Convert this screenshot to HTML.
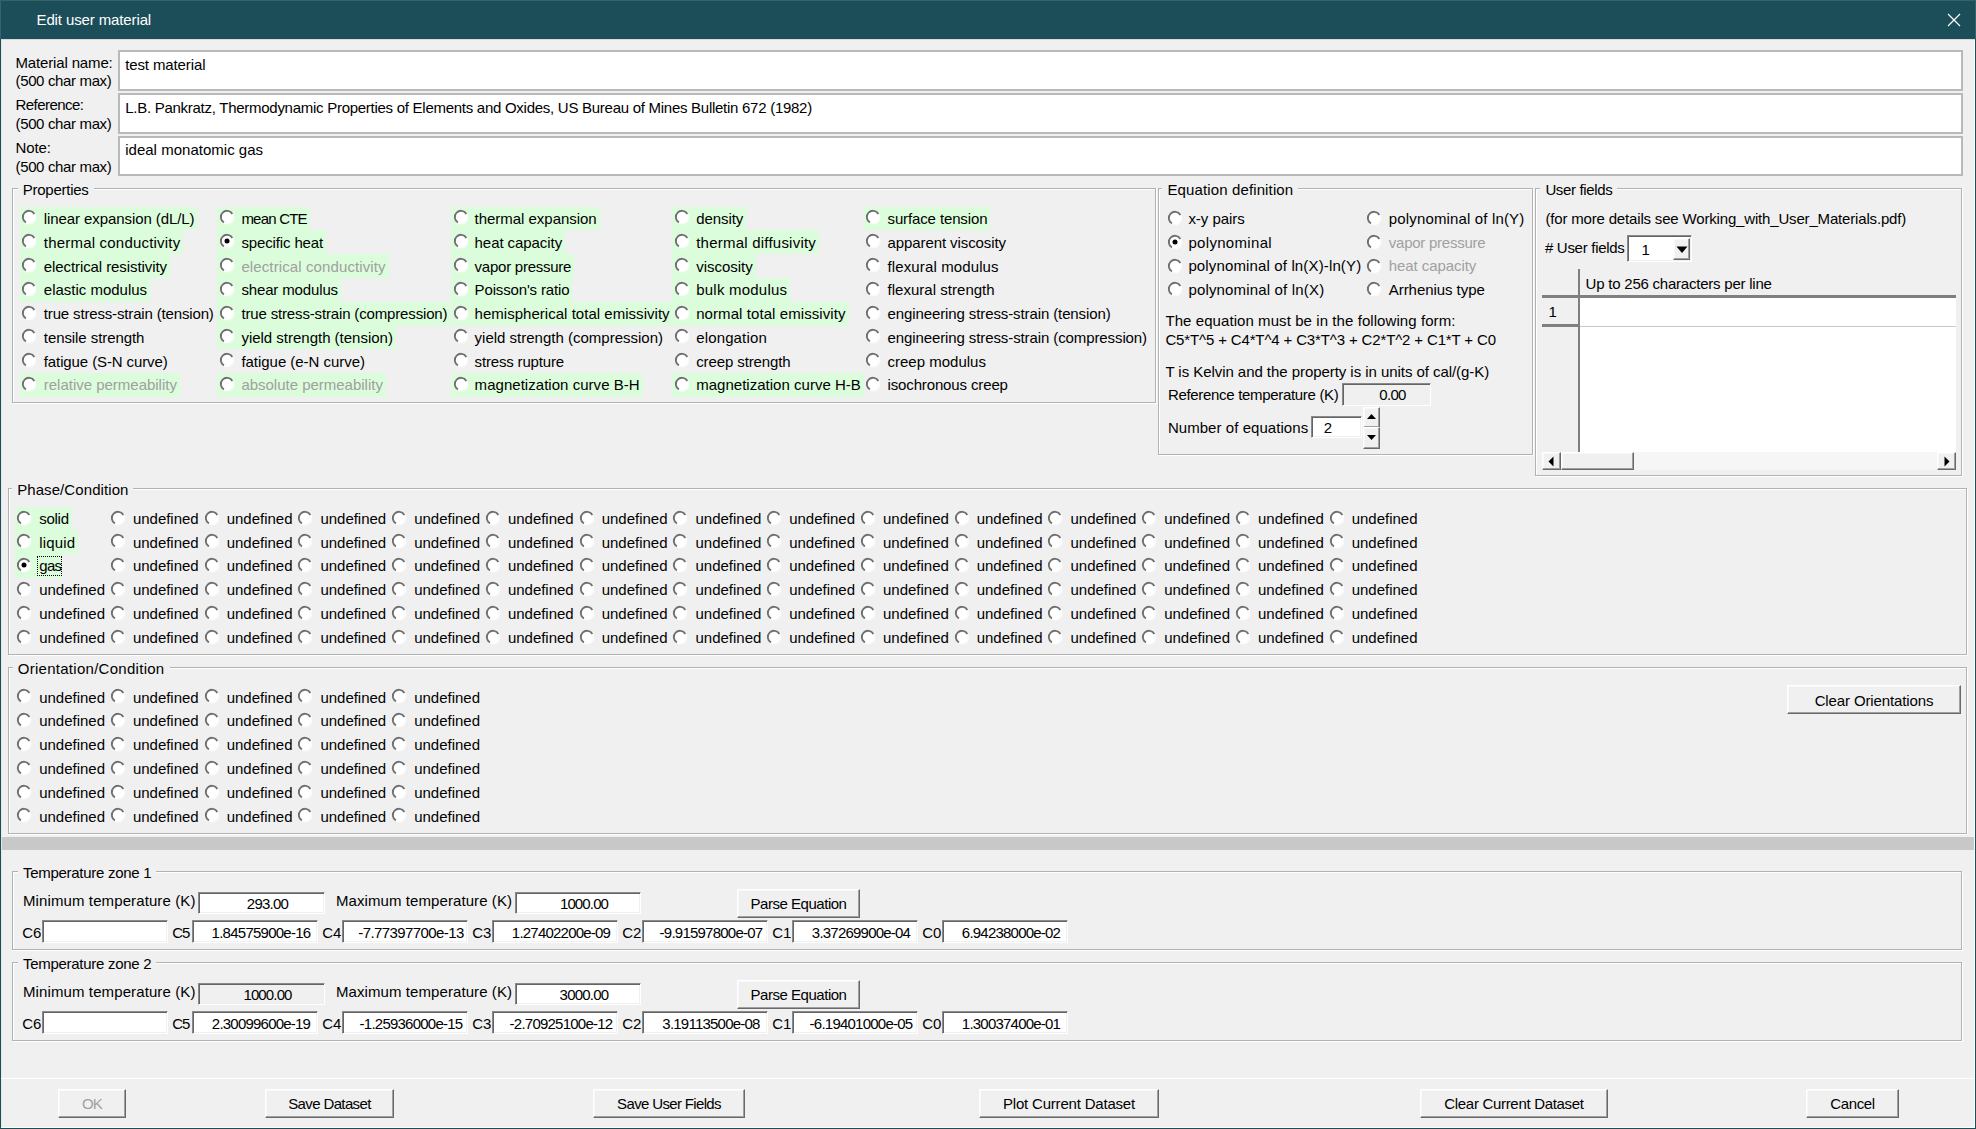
<!DOCTYPE html>
<html><head><meta charset="utf-8"><title>Edit user material</title>
<style>
html,body{margin:0;padding:0}
body{width:1976px;height:1129px;overflow:hidden;background:#f0f0f0;position:relative;font-family:"Liberation Sans",sans-serif;font-size:15px;color:#000}
.a{position:absolute}
.t{position:absolute;white-space:pre;line-height:20px;letter-spacing:-0.15px}
</style></head><body>

<div class="a" style="left:0px;top:0px;width:1976px;height:39px;background:#1c4e59"></div>
<div class="a" style="left:0px;top:0px;width:1976px;height:1px;background:#35636c"></div>
<div class="a" style="left:0px;top:0px;width:1px;height:39px;background:#35636c"></div>
<div class="a" style="left:1975px;top:0px;width:1px;height:39px;background:#35636c"></div>
<div class="t" style="left:36.5px;top:9.8px;color:#fff;letter-spacing:-0.118px">Edit user material</div>
<svg class="a" style="left:1947px;top:13px" width="14" height="14"><path d="M1 1L13 13M13 1L1 13" stroke="#fff" stroke-width="1.2"/></svg>
<div class="a" style="left:0px;top:39px;width:1px;height:1090px;background:#1c4e59"></div>
<div class="a" style="left:1975px;top:39px;width:1px;height:1090px;background:#1c4e59"></div>
<div class="a" style="left:0px;top:1128px;width:1976px;height:1px;background:#1c4e59"></div>
<div class="a" style="left:1px;top:39px;width:1974px;height:1px;background:#d9d9d9"></div>
<div class="a" style="left:1px;top:40px;width:1px;height:1087px;background:#e6e6e6"></div>
<div class="a" style="left:1px;top:1127px;width:1974px;height:1px;background:#fff"></div>
<div class="a" style="left:1974px;top:40px;width:1px;height:1088px;background:#fff"></div>
<div class="t" style="left:15.5px;top:52.7px;letter-spacing:-0.151px">Material name:</div>
<div class="t" style="left:15.5px;top:71.4px;letter-spacing:-0.355px">(500 char max)</div>
<div class="a" style="left:118px;top:50px;width:1845px;height:41px;background:#fff;box-sizing:border-box;border:2px solid #b9b9b9"></div>
<div class="t" style="left:125.2px;top:54.6px;letter-spacing:-0.116px">test material</div>
<div class="t" style="left:15.5px;top:95.1px;letter-spacing:-0.558px">Reference:</div>
<div class="t" style="left:15.5px;top:114.0px;letter-spacing:-0.355px">(500 char max)</div>
<div class="a" style="left:118px;top:93px;width:1845px;height:41px;background:#fff;box-sizing:border-box;border:2px solid #b9b9b9"></div>
<div class="t" style="left:125.2px;top:97.8px;letter-spacing:-0.27px">L.B. Pankratz, Thermodynamic Properties of Elements and Oxides, US Bureau of Mines Bulletin 672 (1982)</div>
<div class="t" style="left:15.5px;top:138.1px;letter-spacing:-0.092px">Note:</div>
<div class="t" style="left:15.5px;top:157.0px;letter-spacing:-0.355px">(500 char max)</div>
<div class="a" style="left:118px;top:136px;width:1845px;height:40px;background:#fff;box-sizing:border-box;border:2px solid #b9b9b9"></div>
<div class="t" style="left:125.2px;top:139.9px;letter-spacing:0.017px">ideal monatomic gas</div>
<div class="a" style="left:13px;top:189px;width:1144px;height:215px;border:1px solid #fff;box-sizing:border-box"></div>
<div class="a" style="left:12px;top:188px;width:1144px;height:215px;border:1px solid #b2b2b2;box-sizing:border-box"></div>
<div class="a" style="left:18px;top:186px;width:76px;height:5px;background:#f0f0f0"></div>
<div class="t" style="left:22.8px;top:180.0px;letter-spacing:-0.258px">Properties</div>
<div class="a" style="left:20px;top:207px;width:177px;height:23px;background:#dcfddc"></div>
<div class="a" style="left:20px;top:230px;width:163px;height:24px;background:#dcfddc"></div>
<div class="a" style="left:20px;top:254px;width:150px;height:24px;background:#dcfddc"></div>
<div class="a" style="left:20px;top:278px;width:130px;height:24px;background:#dcfddc"></div>
<div class="a" style="left:20px;top:373px;width:160px;height:24px;background:#dcfddc"></div>
<div class="a" style="left:217px;top:207px;width:93px;height:23px;background:#dcfddc"></div>
<div class="a" style="left:217px;top:230px;width:109px;height:24px;background:#dcfddc"></div>
<div class="a" style="left:217px;top:254px;width:172px;height:24px;background:#dcfddc"></div>
<div class="a" style="left:217px;top:278px;width:124px;height:24px;background:#dcfddc"></div>
<div class="a" style="left:217px;top:302px;width:233px;height:24px;background:#dcfddc"></div>
<div class="a" style="left:217px;top:325px;width:179px;height:24px;background:#dcfddc"></div>
<div class="a" style="left:217px;top:373px;width:169px;height:24px;background:#dcfddc"></div>
<div class="a" style="left:451px;top:207px;width:149px;height:23px;background:#dcfddc"></div>
<div class="a" style="left:451px;top:230px;width:114px;height:24px;background:#dcfddc"></div>
<div class="a" style="left:451px;top:254px;width:123px;height:24px;background:#dcfddc"></div>
<div class="a" style="left:451px;top:278px;width:121px;height:24px;background:#dcfddc"></div>
<div class="a" style="left:451px;top:302px;width:222px;height:24px;background:#dcfddc"></div>
<div class="a" style="left:451px;top:373px;width:192px;height:24px;background:#dcfddc"></div>
<div class="a" style="left:672px;top:207px;width:74px;height:23px;background:#dcfddc"></div>
<div class="a" style="left:672px;top:230px;width:147px;height:24px;background:#dcfddc"></div>
<div class="a" style="left:672px;top:254px;width:84px;height:24px;background:#dcfddc"></div>
<div class="a" style="left:672px;top:278px;width:118px;height:24px;background:#dcfddc"></div>
<div class="a" style="left:672px;top:302px;width:177px;height:24px;background:#dcfddc"></div>
<div class="a" style="left:672px;top:373px;width:192px;height:24px;background:#dcfddc"></div>
<div class="a" style="left:864px;top:207px;width:126px;height:23px;background:#dcfddc"></div>
<svg class="a" style="left:21.40px;top:209.45px" width="16" height="16"><circle cx="8" cy="8" r="6.8" fill="none" stroke="#fbfbfb" stroke-width="1.2"/><circle cx="8" cy="8" r="6.2" fill="#fff"/><path d="M4.9 13.37A6.2 6.2 0 1 1 13.37 4.9" stroke="#707070" stroke-width="1.9" fill="none"/></svg>
<div class="t" style="left:43.8px;top:209.0px;letter-spacing:-0.087px">linear expansion (dL/L)</div>
<svg class="a" style="left:21.40px;top:233.22px" width="16" height="16"><circle cx="8" cy="8" r="6.8" fill="none" stroke="#fbfbfb" stroke-width="1.2"/><circle cx="8" cy="8" r="6.2" fill="#fff"/><path d="M4.9 13.37A6.2 6.2 0 1 1 13.37 4.9" stroke="#707070" stroke-width="1.9" fill="none"/></svg>
<div class="t" style="left:43.8px;top:232.8px;letter-spacing:0.202px">thermal conductivity</div>
<svg class="a" style="left:21.40px;top:256.99px" width="16" height="16"><circle cx="8" cy="8" r="6.8" fill="none" stroke="#fbfbfb" stroke-width="1.2"/><circle cx="8" cy="8" r="6.2" fill="#fff"/><path d="M4.9 13.37A6.2 6.2 0 1 1 13.37 4.9" stroke="#707070" stroke-width="1.9" fill="none"/></svg>
<div class="t" style="left:43.8px;top:256.6px;letter-spacing:-0.088px">electrical resistivity</div>
<svg class="a" style="left:21.40px;top:280.76px" width="16" height="16"><circle cx="8" cy="8" r="6.8" fill="none" stroke="#fbfbfb" stroke-width="1.2"/><circle cx="8" cy="8" r="6.2" fill="#fff"/><path d="M4.9 13.37A6.2 6.2 0 1 1 13.37 4.9" stroke="#707070" stroke-width="1.9" fill="none"/></svg>
<div class="t" style="left:43.8px;top:280.4px;letter-spacing:-0.006px">elastic modulus</div>
<svg class="a" style="left:21.40px;top:304.53px" width="16" height="16"><circle cx="8" cy="8" r="6.8" fill="none" stroke="#fbfbfb" stroke-width="1.2"/><circle cx="8" cy="8" r="6.2" fill="#fff"/><path d="M4.9 13.37A6.2 6.2 0 1 1 13.37 4.9" stroke="#707070" stroke-width="1.9" fill="none"/></svg>
<div class="t" style="left:43.8px;top:304.1px;letter-spacing:-0.155px">true stress-strain (tension)</div>
<svg class="a" style="left:21.40px;top:328.30px" width="16" height="16"><circle cx="8" cy="8" r="6.8" fill="none" stroke="#fbfbfb" stroke-width="1.2"/><circle cx="8" cy="8" r="6.2" fill="#fff"/><path d="M4.9 13.37A6.2 6.2 0 1 1 13.37 4.9" stroke="#707070" stroke-width="1.9" fill="none"/></svg>
<div class="t" style="left:43.8px;top:327.9px;letter-spacing:-0.077px">tensile strength</div>
<svg class="a" style="left:21.40px;top:352.07px" width="16" height="16"><circle cx="8" cy="8" r="6.8" fill="none" stroke="#fbfbfb" stroke-width="1.2"/><circle cx="8" cy="8" r="6.2" fill="#fff"/><path d="M4.9 13.37A6.2 6.2 0 1 1 13.37 4.9" stroke="#707070" stroke-width="1.9" fill="none"/></svg>
<div class="t" style="left:43.8px;top:351.7px;letter-spacing:-0.109px">fatigue (S-N curve)</div>
<svg class="a" style="left:21.40px;top:375.84px" width="16" height="16"><circle cx="8" cy="8" r="6.8" fill="none" stroke="#fbfbfb" stroke-width="1.2"/><circle cx="8" cy="8" r="6.2" fill="#fff"/><path d="M4.9 13.37A6.2 6.2 0 1 1 13.37 4.9" stroke="#707070" stroke-width="1.9" fill="none"/></svg>
<div class="t" style="left:43.8px;top:375.4px;color:#a0a0a0;letter-spacing:-0.014px">relative permeability</div>
<svg class="a" style="left:219.40px;top:209.45px" width="16" height="16"><circle cx="8" cy="8" r="6.8" fill="none" stroke="#fbfbfb" stroke-width="1.2"/><circle cx="8" cy="8" r="6.2" fill="#fff"/><path d="M4.9 13.37A6.2 6.2 0 1 1 13.37 4.9" stroke="#707070" stroke-width="1.9" fill="none"/></svg>
<div class="t" style="left:241.4px;top:209.0px;letter-spacing:-0.788px">mean CTE</div>
<svg class="a" style="left:219.40px;top:233.22px" width="16" height="16"><circle cx="8" cy="8" r="6.8" fill="none" stroke="#fbfbfb" stroke-width="1.2"/><circle cx="8" cy="8" r="6.2" fill="#fff"/><path d="M4.9 13.37A6.2 6.2 0 1 1 13.37 4.9" stroke="#707070" stroke-width="1.9" fill="none"/><circle cx="8" cy="8" r="2.5" fill="#000"/></svg>
<div class="t" style="left:241.4px;top:232.8px;letter-spacing:-0.13px">specific heat</div>
<svg class="a" style="left:219.40px;top:256.99px" width="16" height="16"><circle cx="8" cy="8" r="6.8" fill="none" stroke="#fbfbfb" stroke-width="1.2"/><circle cx="8" cy="8" r="6.2" fill="#fff"/><path d="M4.9 13.37A6.2 6.2 0 1 1 13.37 4.9" stroke="#707070" stroke-width="1.9" fill="none"/></svg>
<div class="t" style="left:241.4px;top:256.6px;color:#a0a0a0;letter-spacing:0.112px">electrical conductivity</div>
<svg class="a" style="left:219.40px;top:280.76px" width="16" height="16"><circle cx="8" cy="8" r="6.8" fill="none" stroke="#fbfbfb" stroke-width="1.2"/><circle cx="8" cy="8" r="6.2" fill="#fff"/><path d="M4.9 13.37A6.2 6.2 0 1 1 13.37 4.9" stroke="#707070" stroke-width="1.9" fill="none"/></svg>
<div class="t" style="left:241.4px;top:280.4px;letter-spacing:-0.138px">shear modulus</div>
<svg class="a" style="left:219.40px;top:304.53px" width="16" height="16"><circle cx="8" cy="8" r="6.8" fill="none" stroke="#fbfbfb" stroke-width="1.2"/><circle cx="8" cy="8" r="6.2" fill="#fff"/><path d="M4.9 13.37A6.2 6.2 0 1 1 13.37 4.9" stroke="#707070" stroke-width="1.9" fill="none"/></svg>
<div class="t" style="left:241.4px;top:304.1px;letter-spacing:-0.153px">true stress-strain (compression)</div>
<svg class="a" style="left:219.40px;top:328.30px" width="16" height="16"><circle cx="8" cy="8" r="6.8" fill="none" stroke="#fbfbfb" stroke-width="1.2"/><circle cx="8" cy="8" r="6.2" fill="#fff"/><path d="M4.9 13.37A6.2 6.2 0 1 1 13.37 4.9" stroke="#707070" stroke-width="1.9" fill="none"/></svg>
<div class="t" style="left:241.4px;top:327.9px;letter-spacing:-0.01px">yield strength (tension)</div>
<svg class="a" style="left:219.40px;top:352.07px" width="16" height="16"><circle cx="8" cy="8" r="6.8" fill="none" stroke="#fbfbfb" stroke-width="1.2"/><circle cx="8" cy="8" r="6.2" fill="#fff"/><path d="M4.9 13.37A6.2 6.2 0 1 1 13.37 4.9" stroke="#707070" stroke-width="1.9" fill="none"/></svg>
<div class="t" style="left:241.4px;top:351.7px;letter-spacing:-0.033px">fatigue (e-N curve)</div>
<svg class="a" style="left:219.40px;top:375.84px" width="16" height="16"><circle cx="8" cy="8" r="6.8" fill="none" stroke="#fbfbfb" stroke-width="1.2"/><circle cx="8" cy="8" r="6.2" fill="#fff"/><path d="M4.9 13.37A6.2 6.2 0 1 1 13.37 4.9" stroke="#707070" stroke-width="1.9" fill="none"/></svg>
<div class="t" style="left:241.4px;top:375.4px;color:#a0a0a0;letter-spacing:-0.012px">absolute permeability</div>
<svg class="a" style="left:452.80px;top:209.45px" width="16" height="16"><circle cx="8" cy="8" r="6.8" fill="none" stroke="#fbfbfb" stroke-width="1.2"/><circle cx="8" cy="8" r="6.2" fill="#fff"/><path d="M4.9 13.37A6.2 6.2 0 1 1 13.37 4.9" stroke="#707070" stroke-width="1.9" fill="none"/></svg>
<div class="t" style="left:474.6px;top:209.0px;letter-spacing:-0.028px">thermal expansion</div>
<svg class="a" style="left:452.80px;top:233.22px" width="16" height="16"><circle cx="8" cy="8" r="6.8" fill="none" stroke="#fbfbfb" stroke-width="1.2"/><circle cx="8" cy="8" r="6.2" fill="#fff"/><path d="M4.9 13.37A6.2 6.2 0 1 1 13.37 4.9" stroke="#707070" stroke-width="1.9" fill="none"/></svg>
<div class="t" style="left:474.6px;top:232.8px;letter-spacing:-0.069px">heat capacity</div>
<svg class="a" style="left:452.80px;top:256.99px" width="16" height="16"><circle cx="8" cy="8" r="6.8" fill="none" stroke="#fbfbfb" stroke-width="1.2"/><circle cx="8" cy="8" r="6.2" fill="#fff"/><path d="M4.9 13.37A6.2 6.2 0 1 1 13.37 4.9" stroke="#707070" stroke-width="1.9" fill="none"/></svg>
<div class="t" style="left:474.6px;top:256.6px;letter-spacing:-0.247px">vapor pressure</div>
<svg class="a" style="left:452.80px;top:280.76px" width="16" height="16"><circle cx="8" cy="8" r="6.8" fill="none" stroke="#fbfbfb" stroke-width="1.2"/><circle cx="8" cy="8" r="6.2" fill="#fff"/><path d="M4.9 13.37A6.2 6.2 0 1 1 13.37 4.9" stroke="#707070" stroke-width="1.9" fill="none"/></svg>
<div class="t" style="left:474.6px;top:280.4px;letter-spacing:-0.152px">Poisson's ratio</div>
<svg class="a" style="left:452.80px;top:304.53px" width="16" height="16"><circle cx="8" cy="8" r="6.8" fill="none" stroke="#fbfbfb" stroke-width="1.2"/><circle cx="8" cy="8" r="6.2" fill="#fff"/><path d="M4.9 13.37A6.2 6.2 0 1 1 13.37 4.9" stroke="#707070" stroke-width="1.9" fill="none"/></svg>
<div class="t" style="left:474.6px;top:304.1px;letter-spacing:0.026px">hemispherical total emissivity</div>
<svg class="a" style="left:452.80px;top:328.30px" width="16" height="16"><circle cx="8" cy="8" r="6.8" fill="none" stroke="#fbfbfb" stroke-width="1.2"/><circle cx="8" cy="8" r="6.2" fill="#fff"/><path d="M4.9 13.37A6.2 6.2 0 1 1 13.37 4.9" stroke="#707070" stroke-width="1.9" fill="none"/></svg>
<div class="t" style="left:474.6px;top:327.9px;letter-spacing:-0.001px">yield strength (compression)</div>
<svg class="a" style="left:452.80px;top:352.07px" width="16" height="16"><circle cx="8" cy="8" r="6.8" fill="none" stroke="#fbfbfb" stroke-width="1.2"/><circle cx="8" cy="8" r="6.2" fill="#fff"/><path d="M4.9 13.37A6.2 6.2 0 1 1 13.37 4.9" stroke="#707070" stroke-width="1.9" fill="none"/></svg>
<div class="t" style="left:474.6px;top:351.7px;letter-spacing:-0.172px">stress rupture</div>
<svg class="a" style="left:452.80px;top:375.84px" width="16" height="16"><circle cx="8" cy="8" r="6.8" fill="none" stroke="#fbfbfb" stroke-width="1.2"/><circle cx="8" cy="8" r="6.2" fill="#fff"/><path d="M4.9 13.37A6.2 6.2 0 1 1 13.37 4.9" stroke="#707070" stroke-width="1.9" fill="none"/></svg>
<div class="t" style="left:474.6px;top:375.4px;letter-spacing:0.037px">magnetization curve B-H</div>
<svg class="a" style="left:673.50px;top:209.45px" width="16" height="16"><circle cx="8" cy="8" r="6.8" fill="none" stroke="#fbfbfb" stroke-width="1.2"/><circle cx="8" cy="8" r="6.2" fill="#fff"/><path d="M4.9 13.37A6.2 6.2 0 1 1 13.37 4.9" stroke="#707070" stroke-width="1.9" fill="none"/></svg>
<div class="t" style="left:696.2px;top:209.0px;letter-spacing:-0.076px">density</div>
<svg class="a" style="left:673.50px;top:233.22px" width="16" height="16"><circle cx="8" cy="8" r="6.8" fill="none" stroke="#fbfbfb" stroke-width="1.2"/><circle cx="8" cy="8" r="6.2" fill="#fff"/><path d="M4.9 13.37A6.2 6.2 0 1 1 13.37 4.9" stroke="#707070" stroke-width="1.9" fill="none"/></svg>
<div class="t" style="left:696.2px;top:232.8px;letter-spacing:0.226px">thermal diffusivity</div>
<svg class="a" style="left:673.50px;top:256.99px" width="16" height="16"><circle cx="8" cy="8" r="6.8" fill="none" stroke="#fbfbfb" stroke-width="1.2"/><circle cx="8" cy="8" r="6.2" fill="#fff"/><path d="M4.9 13.37A6.2 6.2 0 1 1 13.37 4.9" stroke="#707070" stroke-width="1.9" fill="none"/></svg>
<div class="t" style="left:696.2px;top:256.6px;letter-spacing:-0.021px">viscosity</div>
<svg class="a" style="left:673.50px;top:280.76px" width="16" height="16"><circle cx="8" cy="8" r="6.8" fill="none" stroke="#fbfbfb" stroke-width="1.2"/><circle cx="8" cy="8" r="6.2" fill="#fff"/><path d="M4.9 13.37A6.2 6.2 0 1 1 13.37 4.9" stroke="#707070" stroke-width="1.9" fill="none"/></svg>
<div class="t" style="left:696.2px;top:280.4px;letter-spacing:0.226px">bulk modulus</div>
<svg class="a" style="left:673.50px;top:304.53px" width="16" height="16"><circle cx="8" cy="8" r="6.8" fill="none" stroke="#fbfbfb" stroke-width="1.2"/><circle cx="8" cy="8" r="6.2" fill="#fff"/><path d="M4.9 13.37A6.2 6.2 0 1 1 13.37 4.9" stroke="#707070" stroke-width="1.9" fill="none"/></svg>
<div class="t" style="left:696.2px;top:304.1px;letter-spacing:0.081px">normal total emissivity</div>
<svg class="a" style="left:673.50px;top:328.30px" width="16" height="16"><circle cx="8" cy="8" r="6.8" fill="none" stroke="#fbfbfb" stroke-width="1.2"/><circle cx="8" cy="8" r="6.2" fill="#fff"/><path d="M4.9 13.37A6.2 6.2 0 1 1 13.37 4.9" stroke="#707070" stroke-width="1.9" fill="none"/></svg>
<div class="t" style="left:696.2px;top:327.9px;letter-spacing:0.147px">elongation</div>
<svg class="a" style="left:673.50px;top:352.07px" width="16" height="16"><circle cx="8" cy="8" r="6.8" fill="none" stroke="#fbfbfb" stroke-width="1.2"/><circle cx="8" cy="8" r="6.2" fill="#fff"/><path d="M4.9 13.37A6.2 6.2 0 1 1 13.37 4.9" stroke="#707070" stroke-width="1.9" fill="none"/></svg>
<div class="t" style="left:696.2px;top:351.7px;letter-spacing:-0.106px">creep strength</div>
<svg class="a" style="left:673.50px;top:375.84px" width="16" height="16"><circle cx="8" cy="8" r="6.8" fill="none" stroke="#fbfbfb" stroke-width="1.2"/><circle cx="8" cy="8" r="6.2" fill="#fff"/><path d="M4.9 13.37A6.2 6.2 0 1 1 13.37 4.9" stroke="#707070" stroke-width="1.9" fill="none"/></svg>
<div class="t" style="left:696.2px;top:375.4px;letter-spacing:0.02px">magnetization curve H-B</div>
<svg class="a" style="left:865.20px;top:209.45px" width="16" height="16"><circle cx="8" cy="8" r="6.8" fill="none" stroke="#fbfbfb" stroke-width="1.2"/><circle cx="8" cy="8" r="6.2" fill="#fff"/><path d="M4.9 13.37A6.2 6.2 0 1 1 13.37 4.9" stroke="#707070" stroke-width="1.9" fill="none"/></svg>
<div class="t" style="left:887.5px;top:209.0px;letter-spacing:-0.122px">surface tension</div>
<svg class="a" style="left:865.20px;top:233.22px" width="16" height="16"><circle cx="8" cy="8" r="6.8" fill="none" stroke="#fbfbfb" stroke-width="1.2"/><circle cx="8" cy="8" r="6.2" fill="#fff"/><path d="M4.9 13.37A6.2 6.2 0 1 1 13.37 4.9" stroke="#707070" stroke-width="1.9" fill="none"/></svg>
<div class="t" style="left:887.5px;top:232.8px;letter-spacing:-0.087px">apparent viscosity</div>
<svg class="a" style="left:865.20px;top:256.99px" width="16" height="16"><circle cx="8" cy="8" r="6.8" fill="none" stroke="#fbfbfb" stroke-width="1.2"/><circle cx="8" cy="8" r="6.2" fill="#fff"/><path d="M4.9 13.37A6.2 6.2 0 1 1 13.37 4.9" stroke="#707070" stroke-width="1.9" fill="none"/></svg>
<div class="t" style="left:887.5px;top:256.6px;letter-spacing:0.124px">flexural modulus</div>
<svg class="a" style="left:865.20px;top:280.76px" width="16" height="16"><circle cx="8" cy="8" r="6.8" fill="none" stroke="#fbfbfb" stroke-width="1.2"/><circle cx="8" cy="8" r="6.2" fill="#fff"/><path d="M4.9 13.37A6.2 6.2 0 1 1 13.37 4.9" stroke="#707070" stroke-width="1.9" fill="none"/></svg>
<div class="t" style="left:887.5px;top:280.4px;letter-spacing:0.027px">flexural strength</div>
<svg class="a" style="left:865.20px;top:304.53px" width="16" height="16"><circle cx="8" cy="8" r="6.8" fill="none" stroke="#fbfbfb" stroke-width="1.2"/><circle cx="8" cy="8" r="6.2" fill="#fff"/><path d="M4.9 13.37A6.2 6.2 0 1 1 13.37 4.9" stroke="#707070" stroke-width="1.9" fill="none"/></svg>
<div class="t" style="left:887.5px;top:304.1px;letter-spacing:-0.105px">engineering stress-strain (tension)</div>
<svg class="a" style="left:865.20px;top:328.30px" width="16" height="16"><circle cx="8" cy="8" r="6.8" fill="none" stroke="#fbfbfb" stroke-width="1.2"/><circle cx="8" cy="8" r="6.2" fill="#fff"/><path d="M4.9 13.37A6.2 6.2 0 1 1 13.37 4.9" stroke="#707070" stroke-width="1.9" fill="none"/></svg>
<div class="t" style="left:887.5px;top:327.9px;letter-spacing:-0.101px">engineering stress-strain (compression)</div>
<svg class="a" style="left:865.20px;top:352.07px" width="16" height="16"><circle cx="8" cy="8" r="6.8" fill="none" stroke="#fbfbfb" stroke-width="1.2"/><circle cx="8" cy="8" r="6.2" fill="#fff"/><path d="M4.9 13.37A6.2 6.2 0 1 1 13.37 4.9" stroke="#707070" stroke-width="1.9" fill="none"/></svg>
<div class="t" style="left:887.5px;top:351.7px;letter-spacing:0.001px">creep modulus</div>
<svg class="a" style="left:865.20px;top:375.84px" width="16" height="16"><circle cx="8" cy="8" r="6.8" fill="none" stroke="#fbfbfb" stroke-width="1.2"/><circle cx="8" cy="8" r="6.2" fill="#fff"/><path d="M4.9 13.37A6.2 6.2 0 1 1 13.37 4.9" stroke="#707070" stroke-width="1.9" fill="none"/></svg>
<div class="t" style="left:887.5px;top:375.4px;letter-spacing:-0.134px">isochronous creep</div>
<div class="a" style="left:1159px;top:189px;width:375px;height:267px;border:1px solid #fff;box-sizing:border-box"></div>
<div class="a" style="left:1158px;top:188px;width:375px;height:267px;border:1px solid #b2b2b2;box-sizing:border-box"></div>
<div class="a" style="left:1162px;top:186px;width:136px;height:5px;background:#f0f0f0"></div>
<div class="t" style="left:1167.4px;top:180.0px;letter-spacing:0.13px">Equation definition</div>
<svg class="a" style="left:1166.80px;top:210.40px" width="16" height="16"><circle cx="8" cy="8" r="6.8" fill="none" stroke="#fbfbfb" stroke-width="1.2"/><circle cx="8" cy="8" r="6.2" fill="#fff"/><path d="M4.9 13.37A6.2 6.2 0 1 1 13.37 4.9" stroke="#707070" stroke-width="1.9" fill="none"/></svg>
<div class="t" style="left:1188.4px;top:209.2px;letter-spacing:-0.043px">x-y pairs</div>
<svg class="a" style="left:1166.80px;top:234.00px" width="16" height="16"><circle cx="8" cy="8" r="6.8" fill="none" stroke="#fbfbfb" stroke-width="1.2"/><circle cx="8" cy="8" r="6.2" fill="#fff"/><path d="M4.9 13.37A6.2 6.2 0 1 1 13.37 4.9" stroke="#707070" stroke-width="1.9" fill="none"/><circle cx="8" cy="8" r="2.5" fill="#000"/></svg>
<div class="t" style="left:1188.4px;top:232.8px;letter-spacing:0.323px">polynominal</div>
<svg class="a" style="left:1166.80px;top:257.50px" width="16" height="16"><circle cx="8" cy="8" r="6.8" fill="none" stroke="#fbfbfb" stroke-width="1.2"/><circle cx="8" cy="8" r="6.2" fill="#fff"/><path d="M4.9 13.37A6.2 6.2 0 1 1 13.37 4.9" stroke="#707070" stroke-width="1.9" fill="none"/></svg>
<div class="t" style="left:1188.4px;top:256.3px;letter-spacing:0.141px">polynominal of ln(X)-ln(Y)</div>
<svg class="a" style="left:1166.80px;top:281.10px" width="16" height="16"><circle cx="8" cy="8" r="6.8" fill="none" stroke="#fbfbfb" stroke-width="1.2"/><circle cx="8" cy="8" r="6.2" fill="#fff"/><path d="M4.9 13.37A6.2 6.2 0 1 1 13.37 4.9" stroke="#707070" stroke-width="1.9" fill="none"/></svg>
<div class="t" style="left:1188.4px;top:279.9px;letter-spacing:0.167px">polynominal of ln(X)</div>
<svg class="a" style="left:1366.40px;top:210.40px" width="16" height="16"><circle cx="8" cy="8" r="6.8" fill="none" stroke="#fbfbfb" stroke-width="1.2"/><circle cx="8" cy="8" r="6.2" fill="#fff"/><path d="M4.9 13.37A6.2 6.2 0 1 1 13.37 4.9" stroke="#707070" stroke-width="1.9" fill="none"/></svg>
<div class="t" style="left:1388.8px;top:209.2px;letter-spacing:0.152px">polynominal of ln(Y)</div>
<svg class="a" style="left:1366.40px;top:234.00px" width="16" height="16"><circle cx="8" cy="8" r="6.8" fill="none" stroke="#fbfbfb" stroke-width="1.2"/><circle cx="8" cy="8" r="6.2" fill="#fff"/><path d="M4.9 13.37A6.2 6.2 0 1 1 13.37 4.9" stroke="#707070" stroke-width="1.9" fill="none"/></svg>
<div class="t" style="left:1388.8px;top:232.8px;color:#a0a0a0;letter-spacing:-0.247px">vapor pressure</div>
<svg class="a" style="left:1366.40px;top:257.50px" width="16" height="16"><circle cx="8" cy="8" r="6.8" fill="none" stroke="#fbfbfb" stroke-width="1.2"/><circle cx="8" cy="8" r="6.2" fill="#fff"/><path d="M4.9 13.37A6.2 6.2 0 1 1 13.37 4.9" stroke="#707070" stroke-width="1.9" fill="none"/></svg>
<div class="t" style="left:1388.8px;top:256.3px;color:#a0a0a0;letter-spacing:-0.069px">heat capacity</div>
<svg class="a" style="left:1366.40px;top:281.10px" width="16" height="16"><circle cx="8" cy="8" r="6.8" fill="none" stroke="#fbfbfb" stroke-width="1.2"/><circle cx="8" cy="8" r="6.2" fill="#fff"/><path d="M4.9 13.37A6.2 6.2 0 1 1 13.37 4.9" stroke="#707070" stroke-width="1.9" fill="none"/></svg>
<div class="t" style="left:1388.8px;top:279.9px;letter-spacing:-0.058px">Arrhenius type</div>
<div class="t" style="left:1165.4px;top:311.3px;letter-spacing:0.076px">The equation must be in the following form:</div>
<div class="t" style="left:1165.4px;top:329.9px;letter-spacing:-0.14px">C5*T^5 + C4*T^4 + C3*T^3 + C2*T^2 + C1*T + C0</div>
<div class="t" style="left:1165.4px;top:362.1px;letter-spacing:-0.052px">T is Kelvin and the property is in units of cal/(g-K)</div>
<div class="t" style="left:1167.9px;top:385.2px;letter-spacing:-0.313px">Reference temperature (K)</div>
<div class="a" style="left:1342px;top:383px;width:89px;height:23px;background:#f0f0f0;box-sizing:border-box;border:1px solid;border-color:#8a8a8a #fff #fff #8a8a8a;box-shadow:inset 1px 1px #646464,inset -1px -1px #f0f0f0"></div>
<div class="t" style="left:1348px;width:89px;text-align:center;top:385.2px;letter-spacing:-0.73px">0.00</div>
<div class="t" style="left:1167.9px;top:417.6px;letter-spacing:0.055px">Number of equations</div>
<div class="a" style="left:1311px;top:416px;width:51px;height:22px;background:#fff;box-sizing:border-box;border:1px solid;border-color:#8a8a8a #fff #fff #8a8a8a;box-shadow:inset 1px 1px #646464,inset -1px -1px #f0f0f0"></div>
<div class="t" style="left:1323.7px;top:417.8px;letter-spacing:-0.834px">2</div>
<div class="a" style="left:1363px;top:407px;width:17px;height:21px;background:#f0f0f0;box-sizing:border-box;border:1px solid;border-color:#fff #696969 #696969 #fff;box-shadow:inset -1px -1px #a0a0a0,inset 1px 1px #f8f8f8"></div>
<div class="a" style="left:1363px;top:427px;width:17px;height:22px;background:#f0f0f0;box-sizing:border-box;border:1px solid;border-color:#fff #696969 #696969 #fff;box-shadow:inset -1px -1px #a0a0a0,inset 1px 1px #f8f8f8"></div>
<svg class="a" style="left:1366px;top:413px" width="11" height="7"><path d="M1 6L5.5 1L10 6Z" fill="#000"/></svg>
<svg class="a" style="left:1366px;top:434px" width="11" height="7"><path d="M1 1L5.5 6L10 1Z" fill="#000"/></svg>
<div class="a" style="left:1536px;top:189px;width:427px;height:288px;border:1px solid #fff;box-sizing:border-box"></div>
<div class="a" style="left:1535px;top:188px;width:427px;height:288px;border:1px solid #b2b2b2;box-sizing:border-box"></div>
<div class="a" style="left:1540px;top:186px;width:77px;height:5px;background:#f0f0f0"></div>
<div class="t" style="left:1545.4px;top:180.0px;letter-spacing:-0.351px">User fields</div>
<div class="t" style="left:1545.4px;top:208.9px;letter-spacing:-0.17px">(for more details see Working_with_User_Materials.pdf)</div>
<div class="t" style="left:1544.9px;top:237.6px;letter-spacing:-0.283px"># User fields</div>
<div class="a" style="left:1627px;top:235px;width:65px;height:27px;background:#fff;box-sizing:border-box;border:1px solid;border-color:#8a8a8a #fff #fff #8a8a8a;box-shadow:inset 1px 1px #646464,inset -1px -1px #f0f0f0"></div>
<div class="a" style="left:1673px;top:238px;width:17px;height:22px;background:#f0f0f0;box-sizing:border-box;border:1px solid;border-color:#fff #696969 #696969 #fff;box-shadow:inset -1px -1px #a0a0a0,inset 1px 1px #f8f8f8"></div>
<svg class="a" style="left:1676px;top:246px" width="12" height="8"><path d="M0.5 0.5L11.5 0.5L6 7Z" fill="#000"/></svg>
<div class="t" style="left:1641.4px;top:240.2px;letter-spacing:-0.834px">1</div>
<div class="a" style="left:1542px;top:269px;width:414px;height:183px;background:#fff"></div>
<div class="a" style="left:1542px;top:269px;width:414px;height:28px;background:#f0f0f0"></div>
<div class="a" style="left:1542px;top:297px;width:37px;height:155px;background:#f0f0f0"></div>
<div class="a" style="left:1542px;top:295px;width:414px;height:3px;background:#7f7f7f"></div>
<div class="a" style="left:1578px;top:269px;width:2px;height:183px;background:#7f7f7f"></div>
<div class="a" style="left:1542px;top:324px;width:37px;height:3px;background:#7f7f7f"></div>
<div class="a" style="left:1580px;top:326px;width:376px;height:1px;background:#c8c8c8"></div>
<div class="t" style="left:1585.6px;top:273.5px;letter-spacing:-0.224px">Up to 256 characters per line</div>
<div class="t" style="left:1548.4px;top:302.2px;letter-spacing:-0.834px">1</div>
<div class="a" style="left:1542px;top:452px;width:414px;height:18px;background:#f6f6f6"></div>
<div class="a" style="left:1542px;top:452px;width:19px;height:18px;background:#f0f0f0;box-sizing:border-box;border:1px solid;border-color:#fff #696969 #696969 #fff;box-shadow:inset -1px -1px #a0a0a0,inset 1px 1px #f8f8f8"></div>
<div class="a" style="left:1561px;top:452px;width:73px;height:18px;background:#f0f0f0;box-sizing:border-box;border:1px solid;border-color:#fff #696969 #696969 #fff;box-shadow:inset -1px -1px #a0a0a0,inset 1px 1px #f8f8f8"></div>
<div class="a" style="left:1937px;top:452px;width:19px;height:18px;background:#f0f0f0;box-sizing:border-box;border:1px solid;border-color:#fff #696969 #696969 #fff;box-shadow:inset -1px -1px #a0a0a0,inset 1px 1px #f8f8f8"></div>
<svg class="a" style="left:1548px;top:456px" width="6" height="11"><path d="M5.5 0.5L0.5 5.5L5.5 10.5Z" fill="#000"/></svg>
<svg class="a" style="left:1943.5px;top:456px" width="6" height="11"><path d="M0.5 0.5L5.5 5.5L0.5 10.5Z" fill="#000"/></svg>
<div class="a" style="left:9px;top:489px;width:1959px;height:167px;border:1px solid #fff;box-sizing:border-box"></div>
<div class="a" style="left:8px;top:488px;width:1959px;height:167px;border:1px solid #b2b2b2;box-sizing:border-box"></div>
<div class="a" style="left:12px;top:486px;width:121px;height:5px;background:#f0f0f0"></div>
<div class="t" style="left:17.2px;top:480.0px;letter-spacing:0.081px">Phase/Condition</div>
<div class="a" style="left:15px;top:507px;width:57px;height:23px;background:#dcfddc"></div>
<div class="a" style="left:15px;top:530px;width:63px;height:24px;background:#dcfddc"></div>
<div class="a" style="left:15px;top:554px;width:47px;height:24px;background:#dcfddc"></div>
<svg class="a" style="left:16.00px;top:509.50px" width="16" height="16"><circle cx="8" cy="8" r="6.8" fill="none" stroke="#fbfbfb" stroke-width="1.2"/><circle cx="8" cy="8" r="6.2" fill="#fff"/><path d="M4.9 13.37A6.2 6.2 0 1 1 13.37 4.9" stroke="#707070" stroke-width="1.9" fill="none"/></svg>
<div class="t" style="left:39.2px;top:508.8px;letter-spacing:-0.252px">solid</div>
<svg class="a" style="left:109.75px;top:509.50px" width="16" height="16"><circle cx="8" cy="8" r="6.8" fill="none" stroke="#fbfbfb" stroke-width="1.2"/><circle cx="8" cy="8" r="6.2" fill="#fff"/><path d="M4.9 13.37A6.2 6.2 0 1 1 13.37 4.9" stroke="#707070" stroke-width="1.9" fill="none"/></svg>
<div class="t" style="left:132.9px;top:508.8px;letter-spacing:-0.012px">undefined</div>
<svg class="a" style="left:203.50px;top:509.50px" width="16" height="16"><circle cx="8" cy="8" r="6.8" fill="none" stroke="#fbfbfb" stroke-width="1.2"/><circle cx="8" cy="8" r="6.2" fill="#fff"/><path d="M4.9 13.37A6.2 6.2 0 1 1 13.37 4.9" stroke="#707070" stroke-width="1.9" fill="none"/></svg>
<div class="t" style="left:226.7px;top:508.8px;letter-spacing:-0.012px">undefined</div>
<svg class="a" style="left:297.25px;top:509.50px" width="16" height="16"><circle cx="8" cy="8" r="6.8" fill="none" stroke="#fbfbfb" stroke-width="1.2"/><circle cx="8" cy="8" r="6.2" fill="#fff"/><path d="M4.9 13.37A6.2 6.2 0 1 1 13.37 4.9" stroke="#707070" stroke-width="1.9" fill="none"/></svg>
<div class="t" style="left:320.4px;top:508.8px;letter-spacing:-0.012px">undefined</div>
<svg class="a" style="left:391.00px;top:509.50px" width="16" height="16"><circle cx="8" cy="8" r="6.8" fill="none" stroke="#fbfbfb" stroke-width="1.2"/><circle cx="8" cy="8" r="6.2" fill="#fff"/><path d="M4.9 13.37A6.2 6.2 0 1 1 13.37 4.9" stroke="#707070" stroke-width="1.9" fill="none"/></svg>
<div class="t" style="left:414.2px;top:508.8px;letter-spacing:-0.012px">undefined</div>
<svg class="a" style="left:484.75px;top:509.50px" width="16" height="16"><circle cx="8" cy="8" r="6.8" fill="none" stroke="#fbfbfb" stroke-width="1.2"/><circle cx="8" cy="8" r="6.2" fill="#fff"/><path d="M4.9 13.37A6.2 6.2 0 1 1 13.37 4.9" stroke="#707070" stroke-width="1.9" fill="none"/></svg>
<div class="t" style="left:507.9px;top:508.8px;letter-spacing:-0.012px">undefined</div>
<svg class="a" style="left:578.50px;top:509.50px" width="16" height="16"><circle cx="8" cy="8" r="6.8" fill="none" stroke="#fbfbfb" stroke-width="1.2"/><circle cx="8" cy="8" r="6.2" fill="#fff"/><path d="M4.9 13.37A6.2 6.2 0 1 1 13.37 4.9" stroke="#707070" stroke-width="1.9" fill="none"/></svg>
<div class="t" style="left:601.7px;top:508.8px;letter-spacing:-0.012px">undefined</div>
<svg class="a" style="left:672.25px;top:509.50px" width="16" height="16"><circle cx="8" cy="8" r="6.8" fill="none" stroke="#fbfbfb" stroke-width="1.2"/><circle cx="8" cy="8" r="6.2" fill="#fff"/><path d="M4.9 13.37A6.2 6.2 0 1 1 13.37 4.9" stroke="#707070" stroke-width="1.9" fill="none"/></svg>
<div class="t" style="left:695.5px;top:508.8px;letter-spacing:-0.012px">undefined</div>
<svg class="a" style="left:766.00px;top:509.50px" width="16" height="16"><circle cx="8" cy="8" r="6.8" fill="none" stroke="#fbfbfb" stroke-width="1.2"/><circle cx="8" cy="8" r="6.2" fill="#fff"/><path d="M4.9 13.37A6.2 6.2 0 1 1 13.37 4.9" stroke="#707070" stroke-width="1.9" fill="none"/></svg>
<div class="t" style="left:789.2px;top:508.8px;letter-spacing:-0.012px">undefined</div>
<svg class="a" style="left:859.75px;top:509.50px" width="16" height="16"><circle cx="8" cy="8" r="6.8" fill="none" stroke="#fbfbfb" stroke-width="1.2"/><circle cx="8" cy="8" r="6.2" fill="#fff"/><path d="M4.9 13.37A6.2 6.2 0 1 1 13.37 4.9" stroke="#707070" stroke-width="1.9" fill="none"/></svg>
<div class="t" style="left:883.0px;top:508.8px;letter-spacing:-0.012px">undefined</div>
<svg class="a" style="left:953.50px;top:509.50px" width="16" height="16"><circle cx="8" cy="8" r="6.8" fill="none" stroke="#fbfbfb" stroke-width="1.2"/><circle cx="8" cy="8" r="6.2" fill="#fff"/><path d="M4.9 13.37A6.2 6.2 0 1 1 13.37 4.9" stroke="#707070" stroke-width="1.9" fill="none"/></svg>
<div class="t" style="left:976.7px;top:508.8px;letter-spacing:-0.012px">undefined</div>
<svg class="a" style="left:1047.25px;top:509.50px" width="16" height="16"><circle cx="8" cy="8" r="6.8" fill="none" stroke="#fbfbfb" stroke-width="1.2"/><circle cx="8" cy="8" r="6.2" fill="#fff"/><path d="M4.9 13.37A6.2 6.2 0 1 1 13.37 4.9" stroke="#707070" stroke-width="1.9" fill="none"/></svg>
<div class="t" style="left:1070.5px;top:508.8px;letter-spacing:-0.012px">undefined</div>
<svg class="a" style="left:1141.00px;top:509.50px" width="16" height="16"><circle cx="8" cy="8" r="6.8" fill="none" stroke="#fbfbfb" stroke-width="1.2"/><circle cx="8" cy="8" r="6.2" fill="#fff"/><path d="M4.9 13.37A6.2 6.2 0 1 1 13.37 4.9" stroke="#707070" stroke-width="1.9" fill="none"/></svg>
<div class="t" style="left:1164.2px;top:508.8px;letter-spacing:-0.012px">undefined</div>
<svg class="a" style="left:1234.75px;top:509.50px" width="16" height="16"><circle cx="8" cy="8" r="6.8" fill="none" stroke="#fbfbfb" stroke-width="1.2"/><circle cx="8" cy="8" r="6.2" fill="#fff"/><path d="M4.9 13.37A6.2 6.2 0 1 1 13.37 4.9" stroke="#707070" stroke-width="1.9" fill="none"/></svg>
<div class="t" style="left:1258.0px;top:508.8px;letter-spacing:-0.012px">undefined</div>
<svg class="a" style="left:1328.50px;top:509.50px" width="16" height="16"><circle cx="8" cy="8" r="6.8" fill="none" stroke="#fbfbfb" stroke-width="1.2"/><circle cx="8" cy="8" r="6.2" fill="#fff"/><path d="M4.9 13.37A6.2 6.2 0 1 1 13.37 4.9" stroke="#707070" stroke-width="1.9" fill="none"/></svg>
<div class="t" style="left:1351.7px;top:508.8px;letter-spacing:-0.012px">undefined</div>
<svg class="a" style="left:16.00px;top:533.30px" width="16" height="16"><circle cx="8" cy="8" r="6.8" fill="none" stroke="#fbfbfb" stroke-width="1.2"/><circle cx="8" cy="8" r="6.2" fill="#fff"/><path d="M4.9 13.37A6.2 6.2 0 1 1 13.37 4.9" stroke="#707070" stroke-width="1.9" fill="none"/></svg>
<div class="t" style="left:39.2px;top:532.6px;letter-spacing:0.195px">liquid</div>
<svg class="a" style="left:109.75px;top:533.30px" width="16" height="16"><circle cx="8" cy="8" r="6.8" fill="none" stroke="#fbfbfb" stroke-width="1.2"/><circle cx="8" cy="8" r="6.2" fill="#fff"/><path d="M4.9 13.37A6.2 6.2 0 1 1 13.37 4.9" stroke="#707070" stroke-width="1.9" fill="none"/></svg>
<div class="t" style="left:132.9px;top:532.6px;letter-spacing:-0.012px">undefined</div>
<svg class="a" style="left:203.50px;top:533.30px" width="16" height="16"><circle cx="8" cy="8" r="6.8" fill="none" stroke="#fbfbfb" stroke-width="1.2"/><circle cx="8" cy="8" r="6.2" fill="#fff"/><path d="M4.9 13.37A6.2 6.2 0 1 1 13.37 4.9" stroke="#707070" stroke-width="1.9" fill="none"/></svg>
<div class="t" style="left:226.7px;top:532.6px;letter-spacing:-0.012px">undefined</div>
<svg class="a" style="left:297.25px;top:533.30px" width="16" height="16"><circle cx="8" cy="8" r="6.8" fill="none" stroke="#fbfbfb" stroke-width="1.2"/><circle cx="8" cy="8" r="6.2" fill="#fff"/><path d="M4.9 13.37A6.2 6.2 0 1 1 13.37 4.9" stroke="#707070" stroke-width="1.9" fill="none"/></svg>
<div class="t" style="left:320.4px;top:532.6px;letter-spacing:-0.012px">undefined</div>
<svg class="a" style="left:391.00px;top:533.30px" width="16" height="16"><circle cx="8" cy="8" r="6.8" fill="none" stroke="#fbfbfb" stroke-width="1.2"/><circle cx="8" cy="8" r="6.2" fill="#fff"/><path d="M4.9 13.37A6.2 6.2 0 1 1 13.37 4.9" stroke="#707070" stroke-width="1.9" fill="none"/></svg>
<div class="t" style="left:414.2px;top:532.6px;letter-spacing:-0.012px">undefined</div>
<svg class="a" style="left:484.75px;top:533.30px" width="16" height="16"><circle cx="8" cy="8" r="6.8" fill="none" stroke="#fbfbfb" stroke-width="1.2"/><circle cx="8" cy="8" r="6.2" fill="#fff"/><path d="M4.9 13.37A6.2 6.2 0 1 1 13.37 4.9" stroke="#707070" stroke-width="1.9" fill="none"/></svg>
<div class="t" style="left:507.9px;top:532.6px;letter-spacing:-0.012px">undefined</div>
<svg class="a" style="left:578.50px;top:533.30px" width="16" height="16"><circle cx="8" cy="8" r="6.8" fill="none" stroke="#fbfbfb" stroke-width="1.2"/><circle cx="8" cy="8" r="6.2" fill="#fff"/><path d="M4.9 13.37A6.2 6.2 0 1 1 13.37 4.9" stroke="#707070" stroke-width="1.9" fill="none"/></svg>
<div class="t" style="left:601.7px;top:532.6px;letter-spacing:-0.012px">undefined</div>
<svg class="a" style="left:672.25px;top:533.30px" width="16" height="16"><circle cx="8" cy="8" r="6.8" fill="none" stroke="#fbfbfb" stroke-width="1.2"/><circle cx="8" cy="8" r="6.2" fill="#fff"/><path d="M4.9 13.37A6.2 6.2 0 1 1 13.37 4.9" stroke="#707070" stroke-width="1.9" fill="none"/></svg>
<div class="t" style="left:695.5px;top:532.6px;letter-spacing:-0.012px">undefined</div>
<svg class="a" style="left:766.00px;top:533.30px" width="16" height="16"><circle cx="8" cy="8" r="6.8" fill="none" stroke="#fbfbfb" stroke-width="1.2"/><circle cx="8" cy="8" r="6.2" fill="#fff"/><path d="M4.9 13.37A6.2 6.2 0 1 1 13.37 4.9" stroke="#707070" stroke-width="1.9" fill="none"/></svg>
<div class="t" style="left:789.2px;top:532.6px;letter-spacing:-0.012px">undefined</div>
<svg class="a" style="left:859.75px;top:533.30px" width="16" height="16"><circle cx="8" cy="8" r="6.8" fill="none" stroke="#fbfbfb" stroke-width="1.2"/><circle cx="8" cy="8" r="6.2" fill="#fff"/><path d="M4.9 13.37A6.2 6.2 0 1 1 13.37 4.9" stroke="#707070" stroke-width="1.9" fill="none"/></svg>
<div class="t" style="left:883.0px;top:532.6px;letter-spacing:-0.012px">undefined</div>
<svg class="a" style="left:953.50px;top:533.30px" width="16" height="16"><circle cx="8" cy="8" r="6.8" fill="none" stroke="#fbfbfb" stroke-width="1.2"/><circle cx="8" cy="8" r="6.2" fill="#fff"/><path d="M4.9 13.37A6.2 6.2 0 1 1 13.37 4.9" stroke="#707070" stroke-width="1.9" fill="none"/></svg>
<div class="t" style="left:976.7px;top:532.6px;letter-spacing:-0.012px">undefined</div>
<svg class="a" style="left:1047.25px;top:533.30px" width="16" height="16"><circle cx="8" cy="8" r="6.8" fill="none" stroke="#fbfbfb" stroke-width="1.2"/><circle cx="8" cy="8" r="6.2" fill="#fff"/><path d="M4.9 13.37A6.2 6.2 0 1 1 13.37 4.9" stroke="#707070" stroke-width="1.9" fill="none"/></svg>
<div class="t" style="left:1070.5px;top:532.6px;letter-spacing:-0.012px">undefined</div>
<svg class="a" style="left:1141.00px;top:533.30px" width="16" height="16"><circle cx="8" cy="8" r="6.8" fill="none" stroke="#fbfbfb" stroke-width="1.2"/><circle cx="8" cy="8" r="6.2" fill="#fff"/><path d="M4.9 13.37A6.2 6.2 0 1 1 13.37 4.9" stroke="#707070" stroke-width="1.9" fill="none"/></svg>
<div class="t" style="left:1164.2px;top:532.6px;letter-spacing:-0.012px">undefined</div>
<svg class="a" style="left:1234.75px;top:533.30px" width="16" height="16"><circle cx="8" cy="8" r="6.8" fill="none" stroke="#fbfbfb" stroke-width="1.2"/><circle cx="8" cy="8" r="6.2" fill="#fff"/><path d="M4.9 13.37A6.2 6.2 0 1 1 13.37 4.9" stroke="#707070" stroke-width="1.9" fill="none"/></svg>
<div class="t" style="left:1258.0px;top:532.6px;letter-spacing:-0.012px">undefined</div>
<svg class="a" style="left:1328.50px;top:533.30px" width="16" height="16"><circle cx="8" cy="8" r="6.8" fill="none" stroke="#fbfbfb" stroke-width="1.2"/><circle cx="8" cy="8" r="6.2" fill="#fff"/><path d="M4.9 13.37A6.2 6.2 0 1 1 13.37 4.9" stroke="#707070" stroke-width="1.9" fill="none"/></svg>
<div class="t" style="left:1351.7px;top:532.6px;letter-spacing:-0.012px">undefined</div>
<svg class="a" style="left:16.00px;top:557.10px" width="16" height="16"><circle cx="8" cy="8" r="6.8" fill="none" stroke="#fbfbfb" stroke-width="1.2"/><circle cx="8" cy="8" r="6.2" fill="#fff"/><path d="M4.9 13.37A6.2 6.2 0 1 1 13.37 4.9" stroke="#707070" stroke-width="1.9" fill="none"/><circle cx="8" cy="8" r="2.5" fill="#000"/></svg>
<div class="t" style="left:39.2px;top:556.4px;letter-spacing:-0.629px">gas</div>
<svg class="a" style="left:109.75px;top:557.10px" width="16" height="16"><circle cx="8" cy="8" r="6.8" fill="none" stroke="#fbfbfb" stroke-width="1.2"/><circle cx="8" cy="8" r="6.2" fill="#fff"/><path d="M4.9 13.37A6.2 6.2 0 1 1 13.37 4.9" stroke="#707070" stroke-width="1.9" fill="none"/></svg>
<div class="t" style="left:132.9px;top:556.4px;letter-spacing:-0.012px">undefined</div>
<svg class="a" style="left:203.50px;top:557.10px" width="16" height="16"><circle cx="8" cy="8" r="6.8" fill="none" stroke="#fbfbfb" stroke-width="1.2"/><circle cx="8" cy="8" r="6.2" fill="#fff"/><path d="M4.9 13.37A6.2 6.2 0 1 1 13.37 4.9" stroke="#707070" stroke-width="1.9" fill="none"/></svg>
<div class="t" style="left:226.7px;top:556.4px;letter-spacing:-0.012px">undefined</div>
<svg class="a" style="left:297.25px;top:557.10px" width="16" height="16"><circle cx="8" cy="8" r="6.8" fill="none" stroke="#fbfbfb" stroke-width="1.2"/><circle cx="8" cy="8" r="6.2" fill="#fff"/><path d="M4.9 13.37A6.2 6.2 0 1 1 13.37 4.9" stroke="#707070" stroke-width="1.9" fill="none"/></svg>
<div class="t" style="left:320.4px;top:556.4px;letter-spacing:-0.012px">undefined</div>
<svg class="a" style="left:391.00px;top:557.10px" width="16" height="16"><circle cx="8" cy="8" r="6.8" fill="none" stroke="#fbfbfb" stroke-width="1.2"/><circle cx="8" cy="8" r="6.2" fill="#fff"/><path d="M4.9 13.37A6.2 6.2 0 1 1 13.37 4.9" stroke="#707070" stroke-width="1.9" fill="none"/></svg>
<div class="t" style="left:414.2px;top:556.4px;letter-spacing:-0.012px">undefined</div>
<svg class="a" style="left:484.75px;top:557.10px" width="16" height="16"><circle cx="8" cy="8" r="6.8" fill="none" stroke="#fbfbfb" stroke-width="1.2"/><circle cx="8" cy="8" r="6.2" fill="#fff"/><path d="M4.9 13.37A6.2 6.2 0 1 1 13.37 4.9" stroke="#707070" stroke-width="1.9" fill="none"/></svg>
<div class="t" style="left:507.9px;top:556.4px;letter-spacing:-0.012px">undefined</div>
<svg class="a" style="left:578.50px;top:557.10px" width="16" height="16"><circle cx="8" cy="8" r="6.8" fill="none" stroke="#fbfbfb" stroke-width="1.2"/><circle cx="8" cy="8" r="6.2" fill="#fff"/><path d="M4.9 13.37A6.2 6.2 0 1 1 13.37 4.9" stroke="#707070" stroke-width="1.9" fill="none"/></svg>
<div class="t" style="left:601.7px;top:556.4px;letter-spacing:-0.012px">undefined</div>
<svg class="a" style="left:672.25px;top:557.10px" width="16" height="16"><circle cx="8" cy="8" r="6.8" fill="none" stroke="#fbfbfb" stroke-width="1.2"/><circle cx="8" cy="8" r="6.2" fill="#fff"/><path d="M4.9 13.37A6.2 6.2 0 1 1 13.37 4.9" stroke="#707070" stroke-width="1.9" fill="none"/></svg>
<div class="t" style="left:695.5px;top:556.4px;letter-spacing:-0.012px">undefined</div>
<svg class="a" style="left:766.00px;top:557.10px" width="16" height="16"><circle cx="8" cy="8" r="6.8" fill="none" stroke="#fbfbfb" stroke-width="1.2"/><circle cx="8" cy="8" r="6.2" fill="#fff"/><path d="M4.9 13.37A6.2 6.2 0 1 1 13.37 4.9" stroke="#707070" stroke-width="1.9" fill="none"/></svg>
<div class="t" style="left:789.2px;top:556.4px;letter-spacing:-0.012px">undefined</div>
<svg class="a" style="left:859.75px;top:557.10px" width="16" height="16"><circle cx="8" cy="8" r="6.8" fill="none" stroke="#fbfbfb" stroke-width="1.2"/><circle cx="8" cy="8" r="6.2" fill="#fff"/><path d="M4.9 13.37A6.2 6.2 0 1 1 13.37 4.9" stroke="#707070" stroke-width="1.9" fill="none"/></svg>
<div class="t" style="left:883.0px;top:556.4px;letter-spacing:-0.012px">undefined</div>
<svg class="a" style="left:953.50px;top:557.10px" width="16" height="16"><circle cx="8" cy="8" r="6.8" fill="none" stroke="#fbfbfb" stroke-width="1.2"/><circle cx="8" cy="8" r="6.2" fill="#fff"/><path d="M4.9 13.37A6.2 6.2 0 1 1 13.37 4.9" stroke="#707070" stroke-width="1.9" fill="none"/></svg>
<div class="t" style="left:976.7px;top:556.4px;letter-spacing:-0.012px">undefined</div>
<svg class="a" style="left:1047.25px;top:557.10px" width="16" height="16"><circle cx="8" cy="8" r="6.8" fill="none" stroke="#fbfbfb" stroke-width="1.2"/><circle cx="8" cy="8" r="6.2" fill="#fff"/><path d="M4.9 13.37A6.2 6.2 0 1 1 13.37 4.9" stroke="#707070" stroke-width="1.9" fill="none"/></svg>
<div class="t" style="left:1070.5px;top:556.4px;letter-spacing:-0.012px">undefined</div>
<svg class="a" style="left:1141.00px;top:557.10px" width="16" height="16"><circle cx="8" cy="8" r="6.8" fill="none" stroke="#fbfbfb" stroke-width="1.2"/><circle cx="8" cy="8" r="6.2" fill="#fff"/><path d="M4.9 13.37A6.2 6.2 0 1 1 13.37 4.9" stroke="#707070" stroke-width="1.9" fill="none"/></svg>
<div class="t" style="left:1164.2px;top:556.4px;letter-spacing:-0.012px">undefined</div>
<svg class="a" style="left:1234.75px;top:557.10px" width="16" height="16"><circle cx="8" cy="8" r="6.8" fill="none" stroke="#fbfbfb" stroke-width="1.2"/><circle cx="8" cy="8" r="6.2" fill="#fff"/><path d="M4.9 13.37A6.2 6.2 0 1 1 13.37 4.9" stroke="#707070" stroke-width="1.9" fill="none"/></svg>
<div class="t" style="left:1258.0px;top:556.4px;letter-spacing:-0.012px">undefined</div>
<svg class="a" style="left:1328.50px;top:557.10px" width="16" height="16"><circle cx="8" cy="8" r="6.8" fill="none" stroke="#fbfbfb" stroke-width="1.2"/><circle cx="8" cy="8" r="6.2" fill="#fff"/><path d="M4.9 13.37A6.2 6.2 0 1 1 13.37 4.9" stroke="#707070" stroke-width="1.9" fill="none"/></svg>
<div class="t" style="left:1351.7px;top:556.4px;letter-spacing:-0.012px">undefined</div>
<svg class="a" style="left:16.00px;top:580.90px" width="16" height="16"><circle cx="8" cy="8" r="6.8" fill="none" stroke="#fbfbfb" stroke-width="1.2"/><circle cx="8" cy="8" r="6.2" fill="#fff"/><path d="M4.9 13.37A6.2 6.2 0 1 1 13.37 4.9" stroke="#707070" stroke-width="1.9" fill="none"/></svg>
<div class="t" style="left:39.2px;top:580.2px;letter-spacing:-0.012px">undefined</div>
<svg class="a" style="left:109.75px;top:580.90px" width="16" height="16"><circle cx="8" cy="8" r="6.8" fill="none" stroke="#fbfbfb" stroke-width="1.2"/><circle cx="8" cy="8" r="6.2" fill="#fff"/><path d="M4.9 13.37A6.2 6.2 0 1 1 13.37 4.9" stroke="#707070" stroke-width="1.9" fill="none"/></svg>
<div class="t" style="left:132.9px;top:580.2px;letter-spacing:-0.012px">undefined</div>
<svg class="a" style="left:203.50px;top:580.90px" width="16" height="16"><circle cx="8" cy="8" r="6.8" fill="none" stroke="#fbfbfb" stroke-width="1.2"/><circle cx="8" cy="8" r="6.2" fill="#fff"/><path d="M4.9 13.37A6.2 6.2 0 1 1 13.37 4.9" stroke="#707070" stroke-width="1.9" fill="none"/></svg>
<div class="t" style="left:226.7px;top:580.2px;letter-spacing:-0.012px">undefined</div>
<svg class="a" style="left:297.25px;top:580.90px" width="16" height="16"><circle cx="8" cy="8" r="6.8" fill="none" stroke="#fbfbfb" stroke-width="1.2"/><circle cx="8" cy="8" r="6.2" fill="#fff"/><path d="M4.9 13.37A6.2 6.2 0 1 1 13.37 4.9" stroke="#707070" stroke-width="1.9" fill="none"/></svg>
<div class="t" style="left:320.4px;top:580.2px;letter-spacing:-0.012px">undefined</div>
<svg class="a" style="left:391.00px;top:580.90px" width="16" height="16"><circle cx="8" cy="8" r="6.8" fill="none" stroke="#fbfbfb" stroke-width="1.2"/><circle cx="8" cy="8" r="6.2" fill="#fff"/><path d="M4.9 13.37A6.2 6.2 0 1 1 13.37 4.9" stroke="#707070" stroke-width="1.9" fill="none"/></svg>
<div class="t" style="left:414.2px;top:580.2px;letter-spacing:-0.012px">undefined</div>
<svg class="a" style="left:484.75px;top:580.90px" width="16" height="16"><circle cx="8" cy="8" r="6.8" fill="none" stroke="#fbfbfb" stroke-width="1.2"/><circle cx="8" cy="8" r="6.2" fill="#fff"/><path d="M4.9 13.37A6.2 6.2 0 1 1 13.37 4.9" stroke="#707070" stroke-width="1.9" fill="none"/></svg>
<div class="t" style="left:507.9px;top:580.2px;letter-spacing:-0.012px">undefined</div>
<svg class="a" style="left:578.50px;top:580.90px" width="16" height="16"><circle cx="8" cy="8" r="6.8" fill="none" stroke="#fbfbfb" stroke-width="1.2"/><circle cx="8" cy="8" r="6.2" fill="#fff"/><path d="M4.9 13.37A6.2 6.2 0 1 1 13.37 4.9" stroke="#707070" stroke-width="1.9" fill="none"/></svg>
<div class="t" style="left:601.7px;top:580.2px;letter-spacing:-0.012px">undefined</div>
<svg class="a" style="left:672.25px;top:580.90px" width="16" height="16"><circle cx="8" cy="8" r="6.8" fill="none" stroke="#fbfbfb" stroke-width="1.2"/><circle cx="8" cy="8" r="6.2" fill="#fff"/><path d="M4.9 13.37A6.2 6.2 0 1 1 13.37 4.9" stroke="#707070" stroke-width="1.9" fill="none"/></svg>
<div class="t" style="left:695.5px;top:580.2px;letter-spacing:-0.012px">undefined</div>
<svg class="a" style="left:766.00px;top:580.90px" width="16" height="16"><circle cx="8" cy="8" r="6.8" fill="none" stroke="#fbfbfb" stroke-width="1.2"/><circle cx="8" cy="8" r="6.2" fill="#fff"/><path d="M4.9 13.37A6.2 6.2 0 1 1 13.37 4.9" stroke="#707070" stroke-width="1.9" fill="none"/></svg>
<div class="t" style="left:789.2px;top:580.2px;letter-spacing:-0.012px">undefined</div>
<svg class="a" style="left:859.75px;top:580.90px" width="16" height="16"><circle cx="8" cy="8" r="6.8" fill="none" stroke="#fbfbfb" stroke-width="1.2"/><circle cx="8" cy="8" r="6.2" fill="#fff"/><path d="M4.9 13.37A6.2 6.2 0 1 1 13.37 4.9" stroke="#707070" stroke-width="1.9" fill="none"/></svg>
<div class="t" style="left:883.0px;top:580.2px;letter-spacing:-0.012px">undefined</div>
<svg class="a" style="left:953.50px;top:580.90px" width="16" height="16"><circle cx="8" cy="8" r="6.8" fill="none" stroke="#fbfbfb" stroke-width="1.2"/><circle cx="8" cy="8" r="6.2" fill="#fff"/><path d="M4.9 13.37A6.2 6.2 0 1 1 13.37 4.9" stroke="#707070" stroke-width="1.9" fill="none"/></svg>
<div class="t" style="left:976.7px;top:580.2px;letter-spacing:-0.012px">undefined</div>
<svg class="a" style="left:1047.25px;top:580.90px" width="16" height="16"><circle cx="8" cy="8" r="6.8" fill="none" stroke="#fbfbfb" stroke-width="1.2"/><circle cx="8" cy="8" r="6.2" fill="#fff"/><path d="M4.9 13.37A6.2 6.2 0 1 1 13.37 4.9" stroke="#707070" stroke-width="1.9" fill="none"/></svg>
<div class="t" style="left:1070.5px;top:580.2px;letter-spacing:-0.012px">undefined</div>
<svg class="a" style="left:1141.00px;top:580.90px" width="16" height="16"><circle cx="8" cy="8" r="6.8" fill="none" stroke="#fbfbfb" stroke-width="1.2"/><circle cx="8" cy="8" r="6.2" fill="#fff"/><path d="M4.9 13.37A6.2 6.2 0 1 1 13.37 4.9" stroke="#707070" stroke-width="1.9" fill="none"/></svg>
<div class="t" style="left:1164.2px;top:580.2px;letter-spacing:-0.012px">undefined</div>
<svg class="a" style="left:1234.75px;top:580.90px" width="16" height="16"><circle cx="8" cy="8" r="6.8" fill="none" stroke="#fbfbfb" stroke-width="1.2"/><circle cx="8" cy="8" r="6.2" fill="#fff"/><path d="M4.9 13.37A6.2 6.2 0 1 1 13.37 4.9" stroke="#707070" stroke-width="1.9" fill="none"/></svg>
<div class="t" style="left:1258.0px;top:580.2px;letter-spacing:-0.012px">undefined</div>
<svg class="a" style="left:1328.50px;top:580.90px" width="16" height="16"><circle cx="8" cy="8" r="6.8" fill="none" stroke="#fbfbfb" stroke-width="1.2"/><circle cx="8" cy="8" r="6.2" fill="#fff"/><path d="M4.9 13.37A6.2 6.2 0 1 1 13.37 4.9" stroke="#707070" stroke-width="1.9" fill="none"/></svg>
<div class="t" style="left:1351.7px;top:580.2px;letter-spacing:-0.012px">undefined</div>
<svg class="a" style="left:16.00px;top:604.70px" width="16" height="16"><circle cx="8" cy="8" r="6.8" fill="none" stroke="#fbfbfb" stroke-width="1.2"/><circle cx="8" cy="8" r="6.2" fill="#fff"/><path d="M4.9 13.37A6.2 6.2 0 1 1 13.37 4.9" stroke="#707070" stroke-width="1.9" fill="none"/></svg>
<div class="t" style="left:39.2px;top:604.0px;letter-spacing:-0.012px">undefined</div>
<svg class="a" style="left:109.75px;top:604.70px" width="16" height="16"><circle cx="8" cy="8" r="6.8" fill="none" stroke="#fbfbfb" stroke-width="1.2"/><circle cx="8" cy="8" r="6.2" fill="#fff"/><path d="M4.9 13.37A6.2 6.2 0 1 1 13.37 4.9" stroke="#707070" stroke-width="1.9" fill="none"/></svg>
<div class="t" style="left:132.9px;top:604.0px;letter-spacing:-0.012px">undefined</div>
<svg class="a" style="left:203.50px;top:604.70px" width="16" height="16"><circle cx="8" cy="8" r="6.8" fill="none" stroke="#fbfbfb" stroke-width="1.2"/><circle cx="8" cy="8" r="6.2" fill="#fff"/><path d="M4.9 13.37A6.2 6.2 0 1 1 13.37 4.9" stroke="#707070" stroke-width="1.9" fill="none"/></svg>
<div class="t" style="left:226.7px;top:604.0px;letter-spacing:-0.012px">undefined</div>
<svg class="a" style="left:297.25px;top:604.70px" width="16" height="16"><circle cx="8" cy="8" r="6.8" fill="none" stroke="#fbfbfb" stroke-width="1.2"/><circle cx="8" cy="8" r="6.2" fill="#fff"/><path d="M4.9 13.37A6.2 6.2 0 1 1 13.37 4.9" stroke="#707070" stroke-width="1.9" fill="none"/></svg>
<div class="t" style="left:320.4px;top:604.0px;letter-spacing:-0.012px">undefined</div>
<svg class="a" style="left:391.00px;top:604.70px" width="16" height="16"><circle cx="8" cy="8" r="6.8" fill="none" stroke="#fbfbfb" stroke-width="1.2"/><circle cx="8" cy="8" r="6.2" fill="#fff"/><path d="M4.9 13.37A6.2 6.2 0 1 1 13.37 4.9" stroke="#707070" stroke-width="1.9" fill="none"/></svg>
<div class="t" style="left:414.2px;top:604.0px;letter-spacing:-0.012px">undefined</div>
<svg class="a" style="left:484.75px;top:604.70px" width="16" height="16"><circle cx="8" cy="8" r="6.8" fill="none" stroke="#fbfbfb" stroke-width="1.2"/><circle cx="8" cy="8" r="6.2" fill="#fff"/><path d="M4.9 13.37A6.2 6.2 0 1 1 13.37 4.9" stroke="#707070" stroke-width="1.9" fill="none"/></svg>
<div class="t" style="left:507.9px;top:604.0px;letter-spacing:-0.012px">undefined</div>
<svg class="a" style="left:578.50px;top:604.70px" width="16" height="16"><circle cx="8" cy="8" r="6.8" fill="none" stroke="#fbfbfb" stroke-width="1.2"/><circle cx="8" cy="8" r="6.2" fill="#fff"/><path d="M4.9 13.37A6.2 6.2 0 1 1 13.37 4.9" stroke="#707070" stroke-width="1.9" fill="none"/></svg>
<div class="t" style="left:601.7px;top:604.0px;letter-spacing:-0.012px">undefined</div>
<svg class="a" style="left:672.25px;top:604.70px" width="16" height="16"><circle cx="8" cy="8" r="6.8" fill="none" stroke="#fbfbfb" stroke-width="1.2"/><circle cx="8" cy="8" r="6.2" fill="#fff"/><path d="M4.9 13.37A6.2 6.2 0 1 1 13.37 4.9" stroke="#707070" stroke-width="1.9" fill="none"/></svg>
<div class="t" style="left:695.5px;top:604.0px;letter-spacing:-0.012px">undefined</div>
<svg class="a" style="left:766.00px;top:604.70px" width="16" height="16"><circle cx="8" cy="8" r="6.8" fill="none" stroke="#fbfbfb" stroke-width="1.2"/><circle cx="8" cy="8" r="6.2" fill="#fff"/><path d="M4.9 13.37A6.2 6.2 0 1 1 13.37 4.9" stroke="#707070" stroke-width="1.9" fill="none"/></svg>
<div class="t" style="left:789.2px;top:604.0px;letter-spacing:-0.012px">undefined</div>
<svg class="a" style="left:859.75px;top:604.70px" width="16" height="16"><circle cx="8" cy="8" r="6.8" fill="none" stroke="#fbfbfb" stroke-width="1.2"/><circle cx="8" cy="8" r="6.2" fill="#fff"/><path d="M4.9 13.37A6.2 6.2 0 1 1 13.37 4.9" stroke="#707070" stroke-width="1.9" fill="none"/></svg>
<div class="t" style="left:883.0px;top:604.0px;letter-spacing:-0.012px">undefined</div>
<svg class="a" style="left:953.50px;top:604.70px" width="16" height="16"><circle cx="8" cy="8" r="6.8" fill="none" stroke="#fbfbfb" stroke-width="1.2"/><circle cx="8" cy="8" r="6.2" fill="#fff"/><path d="M4.9 13.37A6.2 6.2 0 1 1 13.37 4.9" stroke="#707070" stroke-width="1.9" fill="none"/></svg>
<div class="t" style="left:976.7px;top:604.0px;letter-spacing:-0.012px">undefined</div>
<svg class="a" style="left:1047.25px;top:604.70px" width="16" height="16"><circle cx="8" cy="8" r="6.8" fill="none" stroke="#fbfbfb" stroke-width="1.2"/><circle cx="8" cy="8" r="6.2" fill="#fff"/><path d="M4.9 13.37A6.2 6.2 0 1 1 13.37 4.9" stroke="#707070" stroke-width="1.9" fill="none"/></svg>
<div class="t" style="left:1070.5px;top:604.0px;letter-spacing:-0.012px">undefined</div>
<svg class="a" style="left:1141.00px;top:604.70px" width="16" height="16"><circle cx="8" cy="8" r="6.8" fill="none" stroke="#fbfbfb" stroke-width="1.2"/><circle cx="8" cy="8" r="6.2" fill="#fff"/><path d="M4.9 13.37A6.2 6.2 0 1 1 13.37 4.9" stroke="#707070" stroke-width="1.9" fill="none"/></svg>
<div class="t" style="left:1164.2px;top:604.0px;letter-spacing:-0.012px">undefined</div>
<svg class="a" style="left:1234.75px;top:604.70px" width="16" height="16"><circle cx="8" cy="8" r="6.8" fill="none" stroke="#fbfbfb" stroke-width="1.2"/><circle cx="8" cy="8" r="6.2" fill="#fff"/><path d="M4.9 13.37A6.2 6.2 0 1 1 13.37 4.9" stroke="#707070" stroke-width="1.9" fill="none"/></svg>
<div class="t" style="left:1258.0px;top:604.0px;letter-spacing:-0.012px">undefined</div>
<svg class="a" style="left:1328.50px;top:604.70px" width="16" height="16"><circle cx="8" cy="8" r="6.8" fill="none" stroke="#fbfbfb" stroke-width="1.2"/><circle cx="8" cy="8" r="6.2" fill="#fff"/><path d="M4.9 13.37A6.2 6.2 0 1 1 13.37 4.9" stroke="#707070" stroke-width="1.9" fill="none"/></svg>
<div class="t" style="left:1351.7px;top:604.0px;letter-spacing:-0.012px">undefined</div>
<svg class="a" style="left:16.00px;top:628.50px" width="16" height="16"><circle cx="8" cy="8" r="6.8" fill="none" stroke="#fbfbfb" stroke-width="1.2"/><circle cx="8" cy="8" r="6.2" fill="#fff"/><path d="M4.9 13.37A6.2 6.2 0 1 1 13.37 4.9" stroke="#707070" stroke-width="1.9" fill="none"/></svg>
<div class="t" style="left:39.2px;top:627.8px;letter-spacing:-0.012px">undefined</div>
<svg class="a" style="left:109.75px;top:628.50px" width="16" height="16"><circle cx="8" cy="8" r="6.8" fill="none" stroke="#fbfbfb" stroke-width="1.2"/><circle cx="8" cy="8" r="6.2" fill="#fff"/><path d="M4.9 13.37A6.2 6.2 0 1 1 13.37 4.9" stroke="#707070" stroke-width="1.9" fill="none"/></svg>
<div class="t" style="left:132.9px;top:627.8px;letter-spacing:-0.012px">undefined</div>
<svg class="a" style="left:203.50px;top:628.50px" width="16" height="16"><circle cx="8" cy="8" r="6.8" fill="none" stroke="#fbfbfb" stroke-width="1.2"/><circle cx="8" cy="8" r="6.2" fill="#fff"/><path d="M4.9 13.37A6.2 6.2 0 1 1 13.37 4.9" stroke="#707070" stroke-width="1.9" fill="none"/></svg>
<div class="t" style="left:226.7px;top:627.8px;letter-spacing:-0.012px">undefined</div>
<svg class="a" style="left:297.25px;top:628.50px" width="16" height="16"><circle cx="8" cy="8" r="6.8" fill="none" stroke="#fbfbfb" stroke-width="1.2"/><circle cx="8" cy="8" r="6.2" fill="#fff"/><path d="M4.9 13.37A6.2 6.2 0 1 1 13.37 4.9" stroke="#707070" stroke-width="1.9" fill="none"/></svg>
<div class="t" style="left:320.4px;top:627.8px;letter-spacing:-0.012px">undefined</div>
<svg class="a" style="left:391.00px;top:628.50px" width="16" height="16"><circle cx="8" cy="8" r="6.8" fill="none" stroke="#fbfbfb" stroke-width="1.2"/><circle cx="8" cy="8" r="6.2" fill="#fff"/><path d="M4.9 13.37A6.2 6.2 0 1 1 13.37 4.9" stroke="#707070" stroke-width="1.9" fill="none"/></svg>
<div class="t" style="left:414.2px;top:627.8px;letter-spacing:-0.012px">undefined</div>
<svg class="a" style="left:484.75px;top:628.50px" width="16" height="16"><circle cx="8" cy="8" r="6.8" fill="none" stroke="#fbfbfb" stroke-width="1.2"/><circle cx="8" cy="8" r="6.2" fill="#fff"/><path d="M4.9 13.37A6.2 6.2 0 1 1 13.37 4.9" stroke="#707070" stroke-width="1.9" fill="none"/></svg>
<div class="t" style="left:507.9px;top:627.8px;letter-spacing:-0.012px">undefined</div>
<svg class="a" style="left:578.50px;top:628.50px" width="16" height="16"><circle cx="8" cy="8" r="6.8" fill="none" stroke="#fbfbfb" stroke-width="1.2"/><circle cx="8" cy="8" r="6.2" fill="#fff"/><path d="M4.9 13.37A6.2 6.2 0 1 1 13.37 4.9" stroke="#707070" stroke-width="1.9" fill="none"/></svg>
<div class="t" style="left:601.7px;top:627.8px;letter-spacing:-0.012px">undefined</div>
<svg class="a" style="left:672.25px;top:628.50px" width="16" height="16"><circle cx="8" cy="8" r="6.8" fill="none" stroke="#fbfbfb" stroke-width="1.2"/><circle cx="8" cy="8" r="6.2" fill="#fff"/><path d="M4.9 13.37A6.2 6.2 0 1 1 13.37 4.9" stroke="#707070" stroke-width="1.9" fill="none"/></svg>
<div class="t" style="left:695.5px;top:627.8px;letter-spacing:-0.012px">undefined</div>
<svg class="a" style="left:766.00px;top:628.50px" width="16" height="16"><circle cx="8" cy="8" r="6.8" fill="none" stroke="#fbfbfb" stroke-width="1.2"/><circle cx="8" cy="8" r="6.2" fill="#fff"/><path d="M4.9 13.37A6.2 6.2 0 1 1 13.37 4.9" stroke="#707070" stroke-width="1.9" fill="none"/></svg>
<div class="t" style="left:789.2px;top:627.8px;letter-spacing:-0.012px">undefined</div>
<svg class="a" style="left:859.75px;top:628.50px" width="16" height="16"><circle cx="8" cy="8" r="6.8" fill="none" stroke="#fbfbfb" stroke-width="1.2"/><circle cx="8" cy="8" r="6.2" fill="#fff"/><path d="M4.9 13.37A6.2 6.2 0 1 1 13.37 4.9" stroke="#707070" stroke-width="1.9" fill="none"/></svg>
<div class="t" style="left:883.0px;top:627.8px;letter-spacing:-0.012px">undefined</div>
<svg class="a" style="left:953.50px;top:628.50px" width="16" height="16"><circle cx="8" cy="8" r="6.8" fill="none" stroke="#fbfbfb" stroke-width="1.2"/><circle cx="8" cy="8" r="6.2" fill="#fff"/><path d="M4.9 13.37A6.2 6.2 0 1 1 13.37 4.9" stroke="#707070" stroke-width="1.9" fill="none"/></svg>
<div class="t" style="left:976.7px;top:627.8px;letter-spacing:-0.012px">undefined</div>
<svg class="a" style="left:1047.25px;top:628.50px" width="16" height="16"><circle cx="8" cy="8" r="6.8" fill="none" stroke="#fbfbfb" stroke-width="1.2"/><circle cx="8" cy="8" r="6.2" fill="#fff"/><path d="M4.9 13.37A6.2 6.2 0 1 1 13.37 4.9" stroke="#707070" stroke-width="1.9" fill="none"/></svg>
<div class="t" style="left:1070.5px;top:627.8px;letter-spacing:-0.012px">undefined</div>
<svg class="a" style="left:1141.00px;top:628.50px" width="16" height="16"><circle cx="8" cy="8" r="6.8" fill="none" stroke="#fbfbfb" stroke-width="1.2"/><circle cx="8" cy="8" r="6.2" fill="#fff"/><path d="M4.9 13.37A6.2 6.2 0 1 1 13.37 4.9" stroke="#707070" stroke-width="1.9" fill="none"/></svg>
<div class="t" style="left:1164.2px;top:627.8px;letter-spacing:-0.012px">undefined</div>
<svg class="a" style="left:1234.75px;top:628.50px" width="16" height="16"><circle cx="8" cy="8" r="6.8" fill="none" stroke="#fbfbfb" stroke-width="1.2"/><circle cx="8" cy="8" r="6.2" fill="#fff"/><path d="M4.9 13.37A6.2 6.2 0 1 1 13.37 4.9" stroke="#707070" stroke-width="1.9" fill="none"/></svg>
<div class="t" style="left:1258.0px;top:627.8px;letter-spacing:-0.012px">undefined</div>
<svg class="a" style="left:1328.50px;top:628.50px" width="16" height="16"><circle cx="8" cy="8" r="6.8" fill="none" stroke="#fbfbfb" stroke-width="1.2"/><circle cx="8" cy="8" r="6.2" fill="#fff"/><path d="M4.9 13.37A6.2 6.2 0 1 1 13.37 4.9" stroke="#707070" stroke-width="1.9" fill="none"/></svg>
<div class="t" style="left:1351.7px;top:627.8px;letter-spacing:-0.012px">undefined</div>
<div class="a" style="left:37px;top:556px;width:25px;height:20px;box-sizing:border-box;border:1px dotted #000"></div>
<div class="a" style="left:9px;top:668px;width:1959px;height:167px;border:1px solid #fff;box-sizing:border-box"></div>
<div class="a" style="left:8px;top:667px;width:1959px;height:167px;border:1px solid #b2b2b2;box-sizing:border-box"></div>
<div class="a" style="left:13px;top:665px;width:157px;height:5px;background:#f0f0f0"></div>
<div class="t" style="left:17.7px;top:659.0px;letter-spacing:0.28px">Orientation/Condition</div>
<svg class="a" style="left:16.00px;top:688.30px" width="16" height="16"><circle cx="8" cy="8" r="6.8" fill="none" stroke="#fbfbfb" stroke-width="1.2"/><circle cx="8" cy="8" r="6.2" fill="#fff"/><path d="M4.9 13.37A6.2 6.2 0 1 1 13.37 4.9" stroke="#707070" stroke-width="1.9" fill="none"/></svg>
<div class="t" style="left:39.2px;top:687.6px;letter-spacing:-0.012px">undefined</div>
<svg class="a" style="left:109.75px;top:688.30px" width="16" height="16"><circle cx="8" cy="8" r="6.8" fill="none" stroke="#fbfbfb" stroke-width="1.2"/><circle cx="8" cy="8" r="6.2" fill="#fff"/><path d="M4.9 13.37A6.2 6.2 0 1 1 13.37 4.9" stroke="#707070" stroke-width="1.9" fill="none"/></svg>
<div class="t" style="left:132.9px;top:687.6px;letter-spacing:-0.012px">undefined</div>
<svg class="a" style="left:203.50px;top:688.30px" width="16" height="16"><circle cx="8" cy="8" r="6.8" fill="none" stroke="#fbfbfb" stroke-width="1.2"/><circle cx="8" cy="8" r="6.2" fill="#fff"/><path d="M4.9 13.37A6.2 6.2 0 1 1 13.37 4.9" stroke="#707070" stroke-width="1.9" fill="none"/></svg>
<div class="t" style="left:226.7px;top:687.6px;letter-spacing:-0.012px">undefined</div>
<svg class="a" style="left:297.25px;top:688.30px" width="16" height="16"><circle cx="8" cy="8" r="6.8" fill="none" stroke="#fbfbfb" stroke-width="1.2"/><circle cx="8" cy="8" r="6.2" fill="#fff"/><path d="M4.9 13.37A6.2 6.2 0 1 1 13.37 4.9" stroke="#707070" stroke-width="1.9" fill="none"/></svg>
<div class="t" style="left:320.4px;top:687.6px;letter-spacing:-0.012px">undefined</div>
<svg class="a" style="left:391.00px;top:688.30px" width="16" height="16"><circle cx="8" cy="8" r="6.8" fill="none" stroke="#fbfbfb" stroke-width="1.2"/><circle cx="8" cy="8" r="6.2" fill="#fff"/><path d="M4.9 13.37A6.2 6.2 0 1 1 13.37 4.9" stroke="#707070" stroke-width="1.9" fill="none"/></svg>
<div class="t" style="left:414.2px;top:687.6px;letter-spacing:-0.012px">undefined</div>
<svg class="a" style="left:16.00px;top:712.10px" width="16" height="16"><circle cx="8" cy="8" r="6.8" fill="none" stroke="#fbfbfb" stroke-width="1.2"/><circle cx="8" cy="8" r="6.2" fill="#fff"/><path d="M4.9 13.37A6.2 6.2 0 1 1 13.37 4.9" stroke="#707070" stroke-width="1.9" fill="none"/></svg>
<div class="t" style="left:39.2px;top:711.4px;letter-spacing:-0.012px">undefined</div>
<svg class="a" style="left:109.75px;top:712.10px" width="16" height="16"><circle cx="8" cy="8" r="6.8" fill="none" stroke="#fbfbfb" stroke-width="1.2"/><circle cx="8" cy="8" r="6.2" fill="#fff"/><path d="M4.9 13.37A6.2 6.2 0 1 1 13.37 4.9" stroke="#707070" stroke-width="1.9" fill="none"/></svg>
<div class="t" style="left:132.9px;top:711.4px;letter-spacing:-0.012px">undefined</div>
<svg class="a" style="left:203.50px;top:712.10px" width="16" height="16"><circle cx="8" cy="8" r="6.8" fill="none" stroke="#fbfbfb" stroke-width="1.2"/><circle cx="8" cy="8" r="6.2" fill="#fff"/><path d="M4.9 13.37A6.2 6.2 0 1 1 13.37 4.9" stroke="#707070" stroke-width="1.9" fill="none"/></svg>
<div class="t" style="left:226.7px;top:711.4px;letter-spacing:-0.012px">undefined</div>
<svg class="a" style="left:297.25px;top:712.10px" width="16" height="16"><circle cx="8" cy="8" r="6.8" fill="none" stroke="#fbfbfb" stroke-width="1.2"/><circle cx="8" cy="8" r="6.2" fill="#fff"/><path d="M4.9 13.37A6.2 6.2 0 1 1 13.37 4.9" stroke="#707070" stroke-width="1.9" fill="none"/></svg>
<div class="t" style="left:320.4px;top:711.4px;letter-spacing:-0.012px">undefined</div>
<svg class="a" style="left:391.00px;top:712.10px" width="16" height="16"><circle cx="8" cy="8" r="6.8" fill="none" stroke="#fbfbfb" stroke-width="1.2"/><circle cx="8" cy="8" r="6.2" fill="#fff"/><path d="M4.9 13.37A6.2 6.2 0 1 1 13.37 4.9" stroke="#707070" stroke-width="1.9" fill="none"/></svg>
<div class="t" style="left:414.2px;top:711.4px;letter-spacing:-0.012px">undefined</div>
<svg class="a" style="left:16.00px;top:735.90px" width="16" height="16"><circle cx="8" cy="8" r="6.8" fill="none" stroke="#fbfbfb" stroke-width="1.2"/><circle cx="8" cy="8" r="6.2" fill="#fff"/><path d="M4.9 13.37A6.2 6.2 0 1 1 13.37 4.9" stroke="#707070" stroke-width="1.9" fill="none"/></svg>
<div class="t" style="left:39.2px;top:735.2px;letter-spacing:-0.012px">undefined</div>
<svg class="a" style="left:109.75px;top:735.90px" width="16" height="16"><circle cx="8" cy="8" r="6.8" fill="none" stroke="#fbfbfb" stroke-width="1.2"/><circle cx="8" cy="8" r="6.2" fill="#fff"/><path d="M4.9 13.37A6.2 6.2 0 1 1 13.37 4.9" stroke="#707070" stroke-width="1.9" fill="none"/></svg>
<div class="t" style="left:132.9px;top:735.2px;letter-spacing:-0.012px">undefined</div>
<svg class="a" style="left:203.50px;top:735.90px" width="16" height="16"><circle cx="8" cy="8" r="6.8" fill="none" stroke="#fbfbfb" stroke-width="1.2"/><circle cx="8" cy="8" r="6.2" fill="#fff"/><path d="M4.9 13.37A6.2 6.2 0 1 1 13.37 4.9" stroke="#707070" stroke-width="1.9" fill="none"/></svg>
<div class="t" style="left:226.7px;top:735.2px;letter-spacing:-0.012px">undefined</div>
<svg class="a" style="left:297.25px;top:735.90px" width="16" height="16"><circle cx="8" cy="8" r="6.8" fill="none" stroke="#fbfbfb" stroke-width="1.2"/><circle cx="8" cy="8" r="6.2" fill="#fff"/><path d="M4.9 13.37A6.2 6.2 0 1 1 13.37 4.9" stroke="#707070" stroke-width="1.9" fill="none"/></svg>
<div class="t" style="left:320.4px;top:735.2px;letter-spacing:-0.012px">undefined</div>
<svg class="a" style="left:391.00px;top:735.90px" width="16" height="16"><circle cx="8" cy="8" r="6.8" fill="none" stroke="#fbfbfb" stroke-width="1.2"/><circle cx="8" cy="8" r="6.2" fill="#fff"/><path d="M4.9 13.37A6.2 6.2 0 1 1 13.37 4.9" stroke="#707070" stroke-width="1.9" fill="none"/></svg>
<div class="t" style="left:414.2px;top:735.2px;letter-spacing:-0.012px">undefined</div>
<svg class="a" style="left:16.00px;top:759.70px" width="16" height="16"><circle cx="8" cy="8" r="6.8" fill="none" stroke="#fbfbfb" stroke-width="1.2"/><circle cx="8" cy="8" r="6.2" fill="#fff"/><path d="M4.9 13.37A6.2 6.2 0 1 1 13.37 4.9" stroke="#707070" stroke-width="1.9" fill="none"/></svg>
<div class="t" style="left:39.2px;top:759.0px;letter-spacing:-0.012px">undefined</div>
<svg class="a" style="left:109.75px;top:759.70px" width="16" height="16"><circle cx="8" cy="8" r="6.8" fill="none" stroke="#fbfbfb" stroke-width="1.2"/><circle cx="8" cy="8" r="6.2" fill="#fff"/><path d="M4.9 13.37A6.2 6.2 0 1 1 13.37 4.9" stroke="#707070" stroke-width="1.9" fill="none"/></svg>
<div class="t" style="left:132.9px;top:759.0px;letter-spacing:-0.012px">undefined</div>
<svg class="a" style="left:203.50px;top:759.70px" width="16" height="16"><circle cx="8" cy="8" r="6.8" fill="none" stroke="#fbfbfb" stroke-width="1.2"/><circle cx="8" cy="8" r="6.2" fill="#fff"/><path d="M4.9 13.37A6.2 6.2 0 1 1 13.37 4.9" stroke="#707070" stroke-width="1.9" fill="none"/></svg>
<div class="t" style="left:226.7px;top:759.0px;letter-spacing:-0.012px">undefined</div>
<svg class="a" style="left:297.25px;top:759.70px" width="16" height="16"><circle cx="8" cy="8" r="6.8" fill="none" stroke="#fbfbfb" stroke-width="1.2"/><circle cx="8" cy="8" r="6.2" fill="#fff"/><path d="M4.9 13.37A6.2 6.2 0 1 1 13.37 4.9" stroke="#707070" stroke-width="1.9" fill="none"/></svg>
<div class="t" style="left:320.4px;top:759.0px;letter-spacing:-0.012px">undefined</div>
<svg class="a" style="left:391.00px;top:759.70px" width="16" height="16"><circle cx="8" cy="8" r="6.8" fill="none" stroke="#fbfbfb" stroke-width="1.2"/><circle cx="8" cy="8" r="6.2" fill="#fff"/><path d="M4.9 13.37A6.2 6.2 0 1 1 13.37 4.9" stroke="#707070" stroke-width="1.9" fill="none"/></svg>
<div class="t" style="left:414.2px;top:759.0px;letter-spacing:-0.012px">undefined</div>
<svg class="a" style="left:16.00px;top:783.50px" width="16" height="16"><circle cx="8" cy="8" r="6.8" fill="none" stroke="#fbfbfb" stroke-width="1.2"/><circle cx="8" cy="8" r="6.2" fill="#fff"/><path d="M4.9 13.37A6.2 6.2 0 1 1 13.37 4.9" stroke="#707070" stroke-width="1.9" fill="none"/></svg>
<div class="t" style="left:39.2px;top:782.8px;letter-spacing:-0.012px">undefined</div>
<svg class="a" style="left:109.75px;top:783.50px" width="16" height="16"><circle cx="8" cy="8" r="6.8" fill="none" stroke="#fbfbfb" stroke-width="1.2"/><circle cx="8" cy="8" r="6.2" fill="#fff"/><path d="M4.9 13.37A6.2 6.2 0 1 1 13.37 4.9" stroke="#707070" stroke-width="1.9" fill="none"/></svg>
<div class="t" style="left:132.9px;top:782.8px;letter-spacing:-0.012px">undefined</div>
<svg class="a" style="left:203.50px;top:783.50px" width="16" height="16"><circle cx="8" cy="8" r="6.8" fill="none" stroke="#fbfbfb" stroke-width="1.2"/><circle cx="8" cy="8" r="6.2" fill="#fff"/><path d="M4.9 13.37A6.2 6.2 0 1 1 13.37 4.9" stroke="#707070" stroke-width="1.9" fill="none"/></svg>
<div class="t" style="left:226.7px;top:782.8px;letter-spacing:-0.012px">undefined</div>
<svg class="a" style="left:297.25px;top:783.50px" width="16" height="16"><circle cx="8" cy="8" r="6.8" fill="none" stroke="#fbfbfb" stroke-width="1.2"/><circle cx="8" cy="8" r="6.2" fill="#fff"/><path d="M4.9 13.37A6.2 6.2 0 1 1 13.37 4.9" stroke="#707070" stroke-width="1.9" fill="none"/></svg>
<div class="t" style="left:320.4px;top:782.8px;letter-spacing:-0.012px">undefined</div>
<svg class="a" style="left:391.00px;top:783.50px" width="16" height="16"><circle cx="8" cy="8" r="6.8" fill="none" stroke="#fbfbfb" stroke-width="1.2"/><circle cx="8" cy="8" r="6.2" fill="#fff"/><path d="M4.9 13.37A6.2 6.2 0 1 1 13.37 4.9" stroke="#707070" stroke-width="1.9" fill="none"/></svg>
<div class="t" style="left:414.2px;top:782.8px;letter-spacing:-0.012px">undefined</div>
<svg class="a" style="left:16.00px;top:807.30px" width="16" height="16"><circle cx="8" cy="8" r="6.8" fill="none" stroke="#fbfbfb" stroke-width="1.2"/><circle cx="8" cy="8" r="6.2" fill="#fff"/><path d="M4.9 13.37A6.2 6.2 0 1 1 13.37 4.9" stroke="#707070" stroke-width="1.9" fill="none"/></svg>
<div class="t" style="left:39.2px;top:806.6px;letter-spacing:-0.012px">undefined</div>
<svg class="a" style="left:109.75px;top:807.30px" width="16" height="16"><circle cx="8" cy="8" r="6.8" fill="none" stroke="#fbfbfb" stroke-width="1.2"/><circle cx="8" cy="8" r="6.2" fill="#fff"/><path d="M4.9 13.37A6.2 6.2 0 1 1 13.37 4.9" stroke="#707070" stroke-width="1.9" fill="none"/></svg>
<div class="t" style="left:132.9px;top:806.6px;letter-spacing:-0.012px">undefined</div>
<svg class="a" style="left:203.50px;top:807.30px" width="16" height="16"><circle cx="8" cy="8" r="6.8" fill="none" stroke="#fbfbfb" stroke-width="1.2"/><circle cx="8" cy="8" r="6.2" fill="#fff"/><path d="M4.9 13.37A6.2 6.2 0 1 1 13.37 4.9" stroke="#707070" stroke-width="1.9" fill="none"/></svg>
<div class="t" style="left:226.7px;top:806.6px;letter-spacing:-0.012px">undefined</div>
<svg class="a" style="left:297.25px;top:807.30px" width="16" height="16"><circle cx="8" cy="8" r="6.8" fill="none" stroke="#fbfbfb" stroke-width="1.2"/><circle cx="8" cy="8" r="6.2" fill="#fff"/><path d="M4.9 13.37A6.2 6.2 0 1 1 13.37 4.9" stroke="#707070" stroke-width="1.9" fill="none"/></svg>
<div class="t" style="left:320.4px;top:806.6px;letter-spacing:-0.012px">undefined</div>
<svg class="a" style="left:391.00px;top:807.30px" width="16" height="16"><circle cx="8" cy="8" r="6.8" fill="none" stroke="#fbfbfb" stroke-width="1.2"/><circle cx="8" cy="8" r="6.2" fill="#fff"/><path d="M4.9 13.37A6.2 6.2 0 1 1 13.37 4.9" stroke="#707070" stroke-width="1.9" fill="none"/></svg>
<div class="t" style="left:414.2px;top:806.6px;letter-spacing:-0.012px">undefined</div>
<div class="a" style="left:1787px;top:685px;width:174px;height:29px;background:#f0f0f0;box-sizing:border-box;border:1px solid;border-color:#fff #696969 #696969 #fff;box-shadow:inset -1px -1px #a0a0a0,inset 1px 1px #f8f8f8"></div>
<div class="t" style="left:1787px;width:174px;text-align:center;top:690.5px;letter-spacing:-0.122px">Clear Orientations</div>
<div class="a" style="left:2px;top:837px;width:1972px;height:13px;background:#c8c8c8"></div>
<div class="a" style="left:13px;top:872px;width:1950px;height:79px;border:1px solid #fff;box-sizing:border-box"></div>
<div class="a" style="left:12px;top:871px;width:1950px;height:79px;border:1px solid #b2b2b2;box-sizing:border-box"></div>
<div class="a" style="left:18px;top:869px;width:138px;height:5px;background:#f0f0f0"></div>
<div class="t" style="left:23.0px;top:863.0px;letter-spacing:-0.285px">Temperature zone 1</div>
<div class="t" style="left:23.0px;top:891.0px;letter-spacing:0.107px">Minimum temperature (K)</div>
<div class="a" style="left:198px;top:892px;width:127px;height:22px;background:#fff;box-sizing:border-box;border:1px solid;border-color:#8a8a8a #fff #fff #8a8a8a;box-shadow:inset 1px 1px #646464,inset -1px -1px #f0f0f0"></div>
<div class="t" style="left:204px;width:127px;text-align:center;top:894.1px;letter-spacing:-0.765px">293.00</div>
<div class="t" style="left:336.0px;top:891.0px;letter-spacing:0.082px">Maximum temperature (K)</div>
<div class="a" style="left:515px;top:892px;width:126px;height:22px;background:#fff;box-sizing:border-box;border:1px solid;border-color:#8a8a8a #fff #fff #8a8a8a;box-shadow:inset 1px 1px #646464,inset -1px -1px #f0f0f0"></div>
<div class="t" style="left:521px;width:126px;text-align:center;top:894.1px;letter-spacing:-0.862px">1000.00</div>
<div class="a" style="left:737px;top:889px;width:123px;height:29px;background:#f0f0f0;box-sizing:border-box;border:1px solid;border-color:#fff #696969 #696969 #fff;box-shadow:inset -1px -1px #a0a0a0,inset 1px 1px #f8f8f8"></div>
<div class="t" style="left:737px;width:123px;text-align:center;top:893.9px;letter-spacing:-0.47px">Parse Equation</div>
<div class="t" style="left:22.3px;top:922.5px;letter-spacing:-0.144px">C6</div>
<div class="a" style="left:42px;top:920px;width:126px;height:23px;background:#fff;box-sizing:border-box;border:1px solid;border-color:#8a8a8a #fff #fff #8a8a8a;box-shadow:inset 1px 1px #646464,inset -1px -1px #f0f0f0"></div>
<div class="t" style="left:172.3px;top:922.5px;letter-spacing:-1.094px">C5</div>
<div class="a" style="left:192px;top:920px;width:126px;height:23px;background:#fff;box-sizing:border-box;border:1px solid;border-color:#8a8a8a #fff #fff #8a8a8a;box-shadow:inset 1px 1px #646464,inset -1px -1px #f0f0f0"></div>
<div class="t" style="left:198px;width:126px;text-align:center;top:922.5px;letter-spacing:-0.749px">1.84575900e-16</div>
<div class="t" style="left:322.3px;top:922.5px;letter-spacing:-0.144px">C4</div>
<div class="a" style="left:342px;top:920px;width:126px;height:23px;background:#fff;box-sizing:border-box;border:1px solid;border-color:#8a8a8a #fff #fff #8a8a8a;box-shadow:inset 1px 1px #646464,inset -1px -1px #f0f0f0"></div>
<div class="t" style="left:348px;width:126px;text-align:center;top:922.5px;letter-spacing:-0.598px">-7.77397700e-13</div>
<div class="t" style="left:472.3px;top:922.5px;letter-spacing:-0.144px">C3</div>
<div class="a" style="left:492px;top:920px;width:126px;height:23px;background:#fff;box-sizing:border-box;border:1px solid;border-color:#8a8a8a #fff #fff #8a8a8a;box-shadow:inset 1px 1px #646464,inset -1px -1px #f0f0f0"></div>
<div class="t" style="left:498px;width:126px;text-align:center;top:922.5px;letter-spacing:-0.781px">1.27402200e-09</div>
<div class="t" style="left:622.3px;top:922.5px;letter-spacing:-0.144px">C2</div>
<div class="a" style="left:642px;top:920px;width:126px;height:23px;background:#fff;box-sizing:border-box;border:1px solid;border-color:#8a8a8a #fff #fff #8a8a8a;box-shadow:inset 1px 1px #646464,inset -1px -1px #f0f0f0"></div>
<div class="t" style="left:648px;width:126px;text-align:center;top:922.5px;letter-spacing:-0.762px">-9.91597800e-07</div>
<div class="t" style="left:772.3px;top:922.5px;letter-spacing:-0.144px">C1</div>
<div class="a" style="left:792px;top:920px;width:126px;height:23px;background:#fff;box-sizing:border-box;border:1px solid;border-color:#8a8a8a #fff #fff #8a8a8a;box-shadow:inset 1px 1px #646464,inset -1px -1px #f0f0f0"></div>
<div class="t" style="left:798px;width:126px;text-align:center;top:922.5px;letter-spacing:-0.781px">3.37269900e-04</div>
<div class="t" style="left:922.3px;top:922.5px;letter-spacing:-0.144px">C0</div>
<div class="a" style="left:942px;top:920px;width:126px;height:23px;background:#fff;box-sizing:border-box;border:1px solid;border-color:#8a8a8a #fff #fff #8a8a8a;box-shadow:inset 1px 1px #646464,inset -1px -1px #f0f0f0"></div>
<div class="t" style="left:948px;width:126px;text-align:center;top:922.5px;letter-spacing:-0.781px">6.94238000e-02</div>
<div class="a" style="left:13px;top:963px;width:1950px;height:79px;border:1px solid #fff;box-sizing:border-box"></div>
<div class="a" style="left:12px;top:962px;width:1950px;height:79px;border:1px solid #b2b2b2;box-sizing:border-box"></div>
<div class="a" style="left:18px;top:960px;width:138px;height:5px;background:#f0f0f0"></div>
<div class="t" style="left:23.0px;top:954.0px;letter-spacing:-0.285px">Temperature zone 2</div>
<div class="t" style="left:23.0px;top:982.0px;letter-spacing:0.107px">Minimum temperature (K)</div>
<div class="a" style="left:198px;top:983px;width:127px;height:22px;background:#f0f0f0;box-sizing:border-box;border:1px solid;border-color:#8a8a8a #fff #fff #8a8a8a;box-shadow:inset 1px 1px #646464,inset -1px -1px #f0f0f0"></div>
<div class="t" style="left:204px;width:127px;text-align:center;top:985.1px;letter-spacing:-0.862px">1000.00</div>
<div class="t" style="left:336.0px;top:982.0px;letter-spacing:0.082px">Maximum temperature (K)</div>
<div class="a" style="left:515px;top:983px;width:126px;height:22px;background:#fff;box-sizing:border-box;border:1px solid;border-color:#8a8a8a #fff #fff #8a8a8a;box-shadow:inset 1px 1px #646464,inset -1px -1px #f0f0f0"></div>
<div class="t" style="left:521px;width:126px;text-align:center;top:985.1px;letter-spacing:-0.775px">3000.00</div>
<div class="a" style="left:737px;top:980px;width:123px;height:29px;background:#f0f0f0;box-sizing:border-box;border:1px solid;border-color:#fff #696969 #696969 #fff;box-shadow:inset -1px -1px #a0a0a0,inset 1px 1px #f8f8f8"></div>
<div class="t" style="left:737px;width:123px;text-align:center;top:984.9px;letter-spacing:-0.47px">Parse Equation</div>
<div class="t" style="left:22.3px;top:1013.5px;letter-spacing:-0.144px">C6</div>
<div class="a" style="left:42px;top:1011px;width:126px;height:23px;background:#fff;box-sizing:border-box;border:1px solid;border-color:#8a8a8a #fff #fff #8a8a8a;box-shadow:inset 1px 1px #646464,inset -1px -1px #f0f0f0"></div>
<div class="t" style="left:172.3px;top:1013.5px;letter-spacing:-1.094px">C5</div>
<div class="a" style="left:192px;top:1011px;width:126px;height:23px;background:#fff;box-sizing:border-box;border:1px solid;border-color:#8a8a8a #fff #fff #8a8a8a;box-shadow:inset 1px 1px #646464,inset -1px -1px #f0f0f0"></div>
<div class="t" style="left:198px;width:126px;text-align:center;top:1013.5px;letter-spacing:-0.781px">2.30099600e-19</div>
<div class="t" style="left:322.3px;top:1013.5px;letter-spacing:-0.144px">C4</div>
<div class="a" style="left:342px;top:1011px;width:126px;height:23px;background:#fff;box-sizing:border-box;border:1px solid;border-color:#8a8a8a #fff #fff #8a8a8a;box-shadow:inset 1px 1px #646464,inset -1px -1px #f0f0f0"></div>
<div class="t" style="left:348px;width:126px;text-align:center;top:1013.5px;letter-spacing:-0.762px">-1.25936000e-15</div>
<div class="t" style="left:472.3px;top:1013.5px;letter-spacing:-0.144px">C3</div>
<div class="a" style="left:492px;top:1011px;width:126px;height:23px;background:#fff;box-sizing:border-box;border:1px solid;border-color:#8a8a8a #fff #fff #8a8a8a;box-shadow:inset 1px 1px #646464,inset -1px -1px #f0f0f0"></div>
<div class="t" style="left:498px;width:126px;text-align:center;top:1013.5px;letter-spacing:-0.762px">-2.70925100e-12</div>
<div class="t" style="left:622.3px;top:1013.5px;letter-spacing:-0.144px">C2</div>
<div class="a" style="left:642px;top:1011px;width:126px;height:23px;background:#fff;box-sizing:border-box;border:1px solid;border-color:#8a8a8a #fff #fff #8a8a8a;box-shadow:inset 1px 1px #646464,inset -1px -1px #f0f0f0"></div>
<div class="t" style="left:648px;width:126px;text-align:center;top:1013.5px;letter-spacing:-0.773px">3.19113500e-08</div>
<div class="t" style="left:772.3px;top:1013.5px;letter-spacing:-0.144px">C1</div>
<div class="a" style="left:792px;top:1011px;width:126px;height:23px;background:#fff;box-sizing:border-box;border:1px solid;border-color:#8a8a8a #fff #fff #8a8a8a;box-shadow:inset 1px 1px #646464,inset -1px -1px #f0f0f0"></div>
<div class="t" style="left:798px;width:126px;text-align:center;top:1013.5px;letter-spacing:-0.762px">-6.19401000e-05</div>
<div class="t" style="left:922.3px;top:1013.5px;letter-spacing:-0.144px">C0</div>
<div class="a" style="left:942px;top:1011px;width:126px;height:23px;background:#fff;box-sizing:border-box;border:1px solid;border-color:#8a8a8a #fff #fff #8a8a8a;box-shadow:inset 1px 1px #646464,inset -1px -1px #f0f0f0"></div>
<div class="t" style="left:948px;width:126px;text-align:center;top:1013.5px;letter-spacing:-0.781px">1.30037400e-01</div>
<div class="a" style="left:1px;top:1078px;width:1974px;height:1px;background:#fff"></div>
<div class="a" style="left:58px;top:1089px;width:68px;height:29px;background:#f0f0f0;box-sizing:border-box;border:1px solid;border-color:#fff #696969 #696969 #fff;box-shadow:inset -1px -1px #a0a0a0,inset 1px 1px #f8f8f8"></div>
<div class="t" style="left:58px;width:68px;text-align:center;top:1093.8px;letter-spacing:-0.744px;color:#a0a0a0">OK</div>
<div class="a" style="left:265px;top:1089px;width:129px;height:29px;background:#f0f0f0;box-sizing:border-box;border:1px solid;border-color:#fff #696969 #696969 #fff;box-shadow:inset -1px -1px #a0a0a0,inset 1px 1px #f8f8f8"></div>
<div class="t" style="left:265px;width:129px;text-align:center;top:1093.8px;letter-spacing:-0.63px">Save Dataset</div>
<div class="a" style="left:593px;top:1089px;width:152px;height:29px;background:#f0f0f0;box-sizing:border-box;border:1px solid;border-color:#fff #696969 #696969 #fff;box-shadow:inset -1px -1px #a0a0a0,inset 1px 1px #f8f8f8"></div>
<div class="t" style="left:593px;width:152px;text-align:center;top:1093.8px;letter-spacing:-0.651px">Save User Fields</div>
<div class="a" style="left:979px;top:1089px;width:180px;height:29px;background:#f0f0f0;box-sizing:border-box;border:1px solid;border-color:#fff #696969 #696969 #fff;box-shadow:inset -1px -1px #a0a0a0,inset 1px 1px #f8f8f8"></div>
<div class="t" style="left:979px;width:180px;text-align:center;top:1093.8px;letter-spacing:-0.195px">Plot Current Dataset</div>
<div class="a" style="left:1420px;top:1089px;width:188px;height:29px;background:#f0f0f0;box-sizing:border-box;border:1px solid;border-color:#fff #696969 #696969 #fff;box-shadow:inset -1px -1px #a0a0a0,inset 1px 1px #f8f8f8"></div>
<div class="t" style="left:1420px;width:188px;text-align:center;top:1093.8px;letter-spacing:-0.31px">Clear Current Dataset</div>
<div class="a" style="left:1806px;top:1089px;width:93px;height:29px;background:#f0f0f0;box-sizing:border-box;border:1px solid;border-color:#fff #696969 #696969 #fff;box-shadow:inset -1px -1px #a0a0a0,inset 1px 1px #f8f8f8"></div>
<div class="t" style="left:1806px;width:93px;text-align:center;top:1093.8px;letter-spacing:-0.351px">Cancel</div>
</body></html>
